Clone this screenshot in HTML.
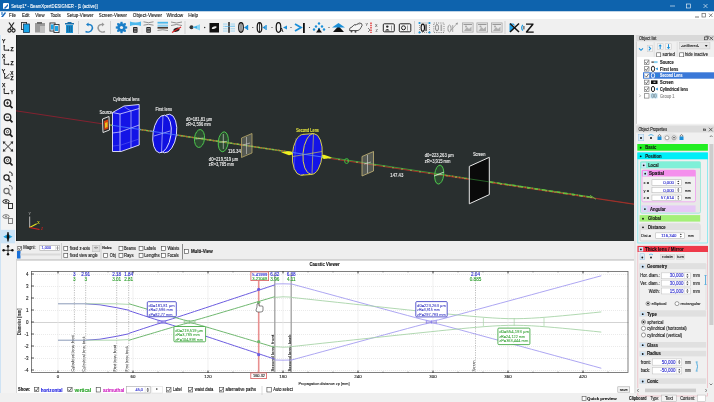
<!DOCTYPE html>
<html><head><meta charset="utf-8">
<style>
*{margin:0;padding:0}
html,body{width:714px;height:402px;overflow:hidden;background:#f0f0f0}
svg{display:block;font-family:"Liberation Sans",sans-serif;will-change:transform}
</style></head><body>
<svg width="714" height="402" viewBox="0 0 714 402">
<rect x="0" y="0" width="714" height="402" fill="#f0f0f0"/>
<rect x="0" y="0" width="714" height="11.5" fill="#0e63ad"/>
<rect x="0" y="11.5" width="714" height="7.8" fill="#ffffff"/>
<rect x="0" y="19" width="714" height="16" fill="#f0f0f0"/>
<rect x="0" y="35" width="16" height="358" fill="#f3f3f3"/>
<rect x="0" y="35" width="1" height="358" fill="#cfe3f4"/>
<rect x="16" y="35" width="618" height="206" fill="#292f2f"/>
<rect x="16" y="241" width="618" height="19" fill="#eeeeee"/>
<rect x="16" y="259.6" width="618" height="1" fill="#a8a8a8"/>
<rect x="16" y="260.6" width="618" height="133" fill="#ffffff"/>
<rect x="16" y="260.6" width="0.8" height="133" fill="#d0d0d0"/>
<rect x="635" y="35" width="79" height="358" fill="#f0f0f0"/>
<rect x="0" y="393" width="714" height="9" fill="#f0f0f0"/>
<rect x="3" y="3" width="6" height="6" fill="#ffffff" rx="1"/>
<polygon points="4.00,8.00 8.00,4.00 8.00,6.00 5.00,9.00" fill="#1b66b8"/>
<text x="11.2" y="8.16" font-size="6" fill="#ffffff" textLength="86.4" lengthAdjust="spacingAndGlyphs" stroke="#ffffff" stroke-width="0.12">Setup1* - BeamXpertDESIGNER - [1 (active)]</text>
<line x1="670" y1="6" x2="675" y2="6" stroke="#ffffff" stroke-width="0.6"/>
<rect x="686.3" y="4" width="4" height="4" fill="none" stroke="#fff" stroke-width="0.6"/>
<line x1="703.5" y1="4" x2="707.5" y2="8" stroke="#ffffff" stroke-width="0.6"/>
<line x1="707.5" y1="4" x2="703.5" y2="8" stroke="#ffffff" stroke-width="0.6"/>
<polygon points="1.00,17.00 5.00,12.00 6.00,13.00 3.00,17.00" fill="#1b66b8"/>
<rect x="1" y="12" width="2" height="3" fill="#7fb0e0"/>
<text x="9" y="17.42" font-size="5.6" fill="#1a1a1a" textLength="7" lengthAdjust="spacingAndGlyphs" stroke="#1a1a1a" stroke-width="0.12">File</text>
<text x="22" y="17.42" font-size="5.6" fill="#1a1a1a" textLength="7.5" lengthAdjust="spacingAndGlyphs" stroke="#1a1a1a" stroke-width="0.12">Edit</text>
<text x="35.3" y="17.42" font-size="5.6" fill="#1a1a1a" textLength="9.2" lengthAdjust="spacingAndGlyphs" stroke="#1a1a1a" stroke-width="0.12">View</text>
<text x="50.4" y="17.42" font-size="5.6" fill="#1a1a1a" textLength="10.4" lengthAdjust="spacingAndGlyphs" stroke="#1a1a1a" stroke-width="0.12">Tools</text>
<text x="66.7" y="17.42" font-size="5.6" fill="#1a1a1a" textLength="26.7" lengthAdjust="spacingAndGlyphs" stroke="#1a1a1a" stroke-width="0.12">Setup-Viewer</text>
<text x="98.8" y="17.42" font-size="5.6" fill="#1a1a1a" textLength="28.2" lengthAdjust="spacingAndGlyphs" stroke="#1a1a1a" stroke-width="0.12">Screen-Viewer</text>
<text x="132.8" y="17.42" font-size="5.6" fill="#1a1a1a" textLength="29.3" lengthAdjust="spacingAndGlyphs" stroke="#1a1a1a" stroke-width="0.12">Object-Viewer</text>
<text x="166.4" y="17.42" font-size="5.6" fill="#1a1a1a" textLength="16.8" lengthAdjust="spacingAndGlyphs" stroke="#1a1a1a" stroke-width="0.12">Window</text>
<text x="188.2" y="17.42" font-size="5.6" fill="#1a1a1a" textLength="10" lengthAdjust="spacingAndGlyphs" stroke="#1a1a1a" stroke-width="0.12">Help</text>
<line x1="695" y1="17" x2="699" y2="17" stroke="#555" stroke-width="0.8"/>
<rect x="702" y="13.5" width="3.5" height="3.5" fill="none" stroke="#666" stroke-width="0.7"/>
<line x1="709" y1="13.5" x2="712.5" y2="17" stroke="#555" stroke-width="0.7"/>
<line x1="712.5" y1="13.5" x2="709" y2="17" stroke="#555" stroke-width="0.7"/>
<g stroke="#222" stroke-width="1.2" fill="none">
<line x1="9" y1="22.5" x2="13.5" y2="29" stroke="#222" stroke-width="1.2"/>
<line x1="14" y1="22.5" x2="9.5" y2="29" stroke="#222" stroke-width="1.2"/>
<circle cx="9.5" cy="30.5" r="1.6" fill="none" stroke="#222" stroke-width="1.1"/>
<circle cx="13.5" cy="30.5" r="1.6" fill="none" stroke="#222" stroke-width="1.1"/>
</g>
<rect x="21.45" y="22.45" width="5.1" height="7.1" fill="#f0f0f0" stroke="#333" stroke-width="0.9"/>
<rect x="23.5" y="24" width="6" height="8.5" fill="#19a4e8"/>
<rect x="23.5" y="24" width="6" height="8.5" fill="none" stroke="#1a3d5a" stroke-width="0.8"/>
<rect x="35" y="23" width="10" height="9.5" fill="#9a9a9a"/>
<rect x="37" y="22" width="5" height="2" fill="#6a6a6a"/>
<rect x="40" y="26" width="5" height="6.5" fill="#c0c0c0"/>
<rect x="49.95" y="22.95" width="5.1" height="8.1" fill="#e8f4ff" stroke="#333" stroke-width="0.9"/>
<rect x="53.95" y="24.45" width="5.1" height="8.1" fill="#e8f4ff" stroke="#333" stroke-width="0.9"/>
<rect x="51" y="24.5" width="2.5" height="5" fill="#19a4e8"/>
<rect x="55" y="26" width="3" height="5" fill="#19a4e8"/>
<rect x="65" y="23" width="9" height="1.5" fill="#1c6fa8"/>
<rect x="67.5" y="22" width="4" height="1.2" fill="#1c6fa8"/>
<rect x="66" y="25" width="7" height="8" fill="#1a8fd0"/>
<line x1="67.8" y1="26" x2="67.8" y2="32" stroke="#0c4a78" stroke-width="0.6"/>
<line x1="69.5" y1="26" x2="69.5" y2="32" stroke="#0c4a78" stroke-width="0.6"/>
<line x1="71.2" y1="26" x2="71.2" y2="32" stroke="#0c4a78" stroke-width="0.6"/>
<line x1="78.5" y1="21" x2="78.5" y2="34" stroke="#cfcfcf" stroke-width="1"/>
<path d="M86 24.5 L88.5 22.5 L88.5 26.5 Z" fill="#1b7fc8"/>
<path d="M88 24.5 C92 24 93 27 92 29.5 C91 32 88 32.5 85.5 31.5" fill="none" stroke="#1b7fc8" stroke-width="1.5"/>
<path d="M104.5 24.5 L102 22.5 L102 26.5 Z" fill="#9a9a9a"/>
<path d="M102.5 24.5 C98.5 24 97.5 27 98.5 29.5 C99.5 32 102.5 32.5 105 31.5" fill="none" stroke="#9a9a9a" stroke-width="1.5"/>
<line x1="110.5" y1="21" x2="110.5" y2="34" stroke="#cfcfcf" stroke-width="1"/>
<circle cx="121.5" cy="27.5" r="4.2" fill="#1b7fc8"/>
<circle cx="121.5" cy="27.5" r="1.6" fill="#f0f0f0"/>
<rect x="125.00" y="26.40" width="2.2" height="2.2" fill="#1b7fc8"/>
<rect x="123.65" y="29.65" width="2.2" height="2.2" fill="#1b7fc8"/>
<rect x="120.40" y="31.00" width="2.2" height="2.2" fill="#1b7fc8"/>
<rect x="117.15" y="29.65" width="2.2" height="2.2" fill="#1b7fc8"/>
<rect x="115.80" y="26.40" width="2.2" height="2.2" fill="#1b7fc8"/>
<rect x="117.15" y="23.15" width="2.2" height="2.2" fill="#1b7fc8"/>
<rect x="120.40" y="21.80" width="2.2" height="2.2" fill="#1b7fc8"/>
<rect x="123.65" y="23.15" width="2.2" height="2.2" fill="#1b7fc8"/>
<line x1="129" y1="21" x2="129" y2="34" stroke="#e0e0e0" stroke-width="0.6"/>
<line x1="142" y1="21" x2="142" y2="34" stroke="#e0e0e0" stroke-width="0.6"/>
<path d="M130 21.5 Q135.5 23.5 141 21.5 L141 26 Q135.5 24 130 26 Z" fill="#4cb8ec"/>
<rect x="133" y="27" width="4.5" height="5.8" rx="0.8" fill="#222"/>
<rect x="133.8" y="28.3" width="2.9" height="1" fill="#bbb"/>
<rect x="133.8" y="30.6" width="2.9" height="1" fill="#bbb"/>
<path d="M143.5 21.8 Q148.5 23.6 153.5 21.8 M143.5 25.2 Q148.5 23.4 153.5 25.2" fill="none" stroke="#777" stroke-width="0.8"/>
<rect x="146.3" y="27" width="4.5" height="5.8" rx="0.8" fill="#222"/>
<rect x="147.1" y="28.3" width="2.9" height="1" fill="#bbb"/>
<rect x="147.1" y="30.6" width="2.9" height="1" fill="#bbb"/>
<rect x="157.5" y="21.8" width="10.5" height="1.8" fill="#4cb8ec"/>
<rect x="157.5" y="24.6" width="10.5" height="2.2" fill="#8fd0f0"/>
<rect x="157.5" y="27" width="10.5" height="1.6" fill="#4a3a30"/>
<path d="M157.5 30.5 Q162.7 29 168 30.5" fill="none" stroke="#888" stroke-width="0.9"/>
<path d="M171 22 Q176.5 24 182 22 M171 25.5 Q176.5 23.5 182 25.5" fill="none" stroke="#777" stroke-width="0.8"/>
<ellipse cx="176.5" cy="29.8" rx="3.2" ry="1.9" fill="#222" transform="rotate(-20 176.5 29.8)"/>
<line x1="172" y1="32.5" x2="181" y2="27" stroke="#e02020" stroke-width="1.2"/>
<line x1="185" y1="21" x2="185" y2="34" stroke="#cfcfcf" stroke-width="1"/>
<circle cx="191.5" cy="27.3" r="2" fill="#333"/>
<polygon points="192.50,27.30 200.00,24.30 200.00,30.50" fill="#8ad4f2"/>
<polygon points="192.50,27.30 197.00,26.00 197.00,28.60" fill="#3ab0e8"/>
<circle cx="204.7" cy="27.5" r="0.7" fill="#222"/>
<rect x="209.5" y="23" width="9.5" height="9.5" fill="#111"/>
<ellipse cx="214.2" cy="27.6" rx="2.6" ry="1.1" fill="#e8e8e8" transform="rotate(-20 214.2 27.6)"/>
<rect x="228.3" y="22" width="1.4" height="10.8" fill="#111"/>
<rect x="223" y="23.5" width="4.5" height="1.1" fill="#a8d8f0"/>
<rect x="230.5" y="23.5" width="4.5" height="1.1" fill="#a8d8f0"/>
<rect x="223" y="25.8" width="4.5" height="1.1" fill="#a8d8f0"/>
<rect x="230.5" y="25.8" width="4.5" height="1.1" fill="#a8d8f0"/>
<rect x="223" y="28.2" width="4.5" height="1.1" fill="#a8d8f0"/>
<rect x="230.5" y="28.2" width="4.5" height="1.1" fill="#a8d8f0"/>
<rect x="223" y="30.5" width="4.5" height="1.1" fill="#a8d8f0"/>
<rect x="230.5" y="30.5" width="4.5" height="1.1" fill="#a8d8f0"/>
<line x1="225" y1="26.6" x2="235" y2="26.1" stroke="#5ab8ec" stroke-width="0.6"/>
<circle cx="252.8" cy="27.5" r="0.6" fill="#333"/>
<circle cx="272" cy="27.5" r="0.6" fill="#333"/>
<circle cx="291" cy="27.5" r="0.6" fill="#333"/>
<circle cx="309.5" cy="27.5" r="0.6" fill="#333"/>
<circle cx="329" cy="27.5" r="0.6" fill="#333"/>
<ellipse cx="241" cy="27.5" rx="2.3" ry="4.8" fill="none" stroke="#111" stroke-width="1.2"/>
<rect x="240.6" y="22.7" width="0.8" height="9.6" fill="#111"/>
<polygon points="244.00,27.50 247.00,25.50 247.00,29.50" fill="#1b8fd8"/>
<rect x="247" y="25" width="1.2" height="5" fill="#1b8fd8"/>
<ellipse cx="259.5" cy="27.5" rx="2.3" ry="4.8" fill="none" stroke="#111" stroke-width="1.2"/>
<rect x="259.1" y="22.7" width="0.8" height="9.6" fill="#111"/>
<polygon points="262.50,27.50 265.50,25.50 265.50,29.50" fill="#1b8fd8"/>
<rect x="265.5" y="25" width="1.2" height="5" fill="#1b8fd8"/>
<ellipse cx="278.5" cy="27.5" rx="2.3" ry="4.8" fill="none" stroke="#111" stroke-width="1.2"/>
<text x="279.5" y="31.98" font-size="5.5" fill="#111" font-weight="bold" stroke="#111" stroke-width="0.1">A</text>
<polygon points="283.00,27.50 287.00,25.50 287.00,29.50" fill="#1b8fd8"/>
<polyline points="295.00,24.00 301.00,27.50 295.00,31.00" fill="none" stroke="#1b8fd8" stroke-width="1.8"/>
<rect x="303" y="23" width="1.8" height="10" fill="#111"/>
<circle cx="319" cy="23.5" r="1.2" fill="#1b8fd8"/>
<circle cx="316" cy="26.5" r="1.2" fill="#1b8fd8"/>
<circle cx="322" cy="26.5" r="1.2" fill="#1b8fd8"/>
<circle cx="314" cy="29.5" r="1.2" fill="#1b8fd8"/>
<circle cx="319" cy="29" r="1.2" fill="#1b8fd8"/>
<circle cx="324" cy="29.5" r="1.2" fill="#1b8fd8"/>
<polygon points="316.00,32.50 322.00,32.50 319.00,28.50" fill="#111"/>
<polygon points="333.00,32.00 344.00,32.00 338.50,26.00" fill="#111"/>
<polygon points="332.00,27.50 345.00,27.50 338.50,23.00" fill="#1b8fd8"/>
<path d="M349.5 30.5 q-0.5 -3 2.5 -3.5 q1.5 -3 5 -2.5 q2 -2.5 4.5 -1 q1.5 1.5 -0.5 4 q-1 2.5 -3 3 z" fill="#f4f4f4" stroke="#555" stroke-width="1"/>
<path d="M355 25.5 q2 -2.5 5 -1.5" fill="none" stroke="#888" stroke-width="0.8"/>
<circle cx="351.5" cy="31.5" r="1" fill="#444"/>
<circle cx="355.5" cy="31.8" r="1" fill="#444"/>
<text x="365.5" y="25.87" font-size="3.8" fill="#555" stroke="#555" stroke-width="0.12">Y</text>
<text x="375" y="27.37" font-size="3.8" fill="#555" stroke="#555" stroke-width="0.12">X</text>
<text x="375.5" y="32.37" font-size="3.8" fill="#555" stroke="#555" stroke-width="0.12">Z</text>
<line x1="371" y1="22.5" x2="371" y2="33" stroke="#e02020" stroke-width="1.3" stroke-dasharray="1.5,0.8"/>
<polyline points="368.00,28.00 370.00,30.00 368.00,32.00" fill="none" stroke="#333" stroke-width="0.6"/>
<rect x="383.3" y="23.8" width="11" height="8" rx="1" fill="#f4f4f4" stroke="#222" stroke-width="1"/>
<circle cx="387.3" cy="26.6" r="1.2" fill="#222"/>
<path d="M385 30.5 q2.3 -3 4.6 0 z" fill="#222"/>
<line x1="391.5" y1="25.5" x2="391.5" y2="30.5" stroke="#555" stroke-width="0.6"/>
<rect x="399.3" y="23.8" width="11.5" height="8" rx="1" fill="#f4f4f4" stroke="#222" stroke-width="1"/>
<circle cx="403.5" cy="27.8" r="2" fill="none" stroke="#222" stroke-width="1"/>
<line x1="407.5" y1="25.5" x2="407.5" y2="30.5" stroke="#555" stroke-width="0.6"/>
<line x1="414.5" y1="21" x2="414.5" y2="34" stroke="#cfcfcf" stroke-width="1"/>
<rect x="419.5" y="23" width="10" height="9.5" fill="none" stroke="#777" stroke-width="0.7" stroke-dasharray="1,1"/>
<ellipse cx="422.8" cy="27.7" rx="1.7" ry="3.6" fill="none" stroke="#111" stroke-width="1.1"/>
<rect x="425.5" y="24.3" width="1.1" height="6.8" fill="#111"/>
<circle cx="419.5" cy="23" r="1.1" fill="#1b9ae0"/>
<circle cx="429.5" cy="23" r="1.1" fill="#1b9ae0"/>
<circle cx="419.5" cy="32.5" r="1.1" fill="#1b9ae0"/>
<circle cx="429.5" cy="32.5" r="1.1" fill="#1b9ae0"/>
<rect x="433.8" y="23" width="10.2" height="9.5" fill="none" stroke="#666" stroke-width="0.8" stroke-dasharray="1,1.2"/>
<ellipse cx="437" cy="27.7" rx="1.5" ry="3.3" fill="none" stroke="#777" stroke-width="0.9"/>
<rect x="440.5" y="24.5" width="1.6" height="6.5" fill="#aaa"/>
<ellipse cx="449.5" cy="28.5" rx="1.6" ry="3.4" fill="none" stroke="#999" stroke-width="1"/>
<rect x="452.2" y="25" width="1" height="7" fill="#aaa"/>
<line x1="451" y1="30" x2="457.5" y2="23" stroke="#999" stroke-width="0.8"/>
<polygon points="458.00,22.50 455.50,23.20 457.30,25.00" fill="#999"/>
<rect x="462.4" y="22.9" width="10.7" height="9.2" fill="#e8e8e8" stroke="#a8a8a8" stroke-width="0.8"/>
<rect x="463.5" y="24" width="8.5" height="1" fill="#999"/>
<polygon points="464.00,31.00 467.00,27.00 469.00,29.00 471.50,26.50 471.50,31.00" fill="#b0b0b0"/>
<circle cx="466" cy="26.5" r="1" fill="#aaa"/>
<rect x="476.9" y="22.9" width="10.7" height="9.2" fill="#e8e8e8" stroke="#a8a8a8" stroke-width="0.8"/>
<rect x="478.0" y="24" width="8.5" height="1" fill="#999"/>
<polygon points="478.50,31.00 481.50,27.00 483.50,29.00 486.00,26.50 486.00,31.00" fill="#b0b0b0"/>
<circle cx="480.5" cy="26.5" r="1" fill="#aaa"/>
<rect x="491.4" y="22.9" width="10.7" height="9.2" fill="#e8e8e8" stroke="#a8a8a8" stroke-width="0.8"/>
<rect x="492.5" y="24" width="8.5" height="1" fill="#999"/>
<polygon points="493.00,31.00 496.00,27.00 498.00,29.00 500.50,26.50 500.50,31.00" fill="#b0b0b0"/>
<circle cx="495" cy="26.5" r="1" fill="#aaa"/>
<line x1="505" y1="21" x2="505" y2="34" stroke="#cfcfcf" stroke-width="1"/>
<polygon points="509.50,23.50 509.50,32.00 514.00,27.70" fill="#1b9ae0"/>
<polygon points="510.00,23.50 513.50,23.50 515.50,26.00" fill="#1b9ae0"/>
<polyline points="510.00,23.50 519.00,32.00" fill="none" stroke="#111" stroke-width="1.5"/>
<polyline points="519.00,23.50 510.00,32.00" fill="none" stroke="#111" stroke-width="1.5"/>
<path d="M522.8 24.8 q-2.2 2.9 0 5.8" fill="none" stroke="#1b9ae0" stroke-width="1.2"/>
<rect x="523.3" y="26" width="1.2" height="3.4" fill="#555"/>
<path d="M526 23.5 h7.5 v1.3 l-5.6 6.6 h5.8 v1.3 h-7.8 v-1.3 l5.6 -6.6 h-5.5 z" fill="#111"/>
<text x="1.9" y="43.43" font-size="4.8" fill="#111" textLength="3.4" lengthAdjust="spacingAndGlyphs" stroke="#111" stroke-width="0.25">Y</text>
<circle cx="4.2" cy="45.699999999999996" r="0.75" fill="#111"/>
<line x1="4.2" y1="45.699999999999996" x2="4.2" y2="50.199999999999996" stroke="#111" stroke-width="0.9"/>
<line x1="4.2" y1="50.199999999999996" x2="8.600000000000001" y2="50.199999999999996" stroke="#111" stroke-width="0.9"/>
<polygon points="8.10,49.10 9.60,50.20 8.10,51.30" fill="#111"/>
<text x="10.6" y="50.73" font-size="4.8" fill="#111" textLength="3.1" lengthAdjust="spacingAndGlyphs" stroke="#111" stroke-width="0.25">Z</text>
<text x="1.9" y="57.53" font-size="4.8" fill="#111" textLength="3.4" lengthAdjust="spacingAndGlyphs" stroke="#111" stroke-width="0.25">X</text>
<circle cx="4.2" cy="59.8" r="0.75" fill="#111"/>
<line x1="4.2" y1="59.8" x2="4.2" y2="64.3" stroke="#111" stroke-width="0.9"/>
<line x1="4.2" y1="64.3" x2="8.600000000000001" y2="64.3" stroke="#111" stroke-width="0.9"/>
<polygon points="8.10,63.20 9.60,64.30 8.10,65.40" fill="#111"/>
<text x="10.6" y="64.83" font-size="4.8" fill="#111" textLength="3.1" lengthAdjust="spacingAndGlyphs" stroke="#111" stroke-width="0.25">Z</text>
<circle cx="4.6" cy="73.7" r="0.7" fill="#111"/>
<line x1="4.6" y1="73.7" x2="4.6" y2="78.3" stroke="#111" stroke-width="0.8"/>
<line x1="4.6" y1="78.3" x2="9.6" y2="78.0" stroke="#111" stroke-width="0.8"/>
<line x1="4.6" y1="78.3" x2="9.6" y2="73.9" stroke="#111" stroke-width="0.8"/>
<text x="1.8" y="72.56" font-size="4.6" fill="#111" textLength="3.3" lengthAdjust="spacingAndGlyphs" stroke="#111" stroke-width="0.25">Y</text>
<text x="10.3" y="74.76" font-size="4.6" fill="#111" textLength="3.2" lengthAdjust="spacingAndGlyphs" stroke="#111" stroke-width="0.25">X</text>
<text x="10.4" y="79.76" font-size="4.6" fill="#111" textLength="3" lengthAdjust="spacingAndGlyphs" stroke="#111" stroke-width="0.25">Z</text>
<text x="1.9" y="86.73" font-size="4.8" fill="#111" textLength="3.4" lengthAdjust="spacingAndGlyphs" stroke="#111" stroke-width="0.25">X</text>
<circle cx="4.2" cy="89.0" r="0.75" fill="#111"/>
<line x1="4.2" y1="89.0" x2="4.2" y2="93.5" stroke="#111" stroke-width="0.9"/>
<line x1="4.2" y1="93.5" x2="8.600000000000001" y2="93.5" stroke="#111" stroke-width="0.9"/>
<polygon points="8.10,92.40 9.60,93.50 8.10,94.60" fill="#111"/>
<text x="10.6" y="94.03" font-size="4.8" fill="#111" textLength="3.1" lengthAdjust="spacingAndGlyphs" stroke="#111" stroke-width="0.25">Y</text>
<circle cx="7.5" cy="103" r="3.3" fill="none" stroke="#222" stroke-width="1.3"/>
<line x1="9.8" y1="105.4" x2="12.5" y2="108.2" stroke="#222" stroke-width="1.8"/>
<line x1="6" y1="103" x2="9" y2="103" stroke="#222" stroke-width="0.9"/>
<line x1="7.5" y1="101.5" x2="7.5" y2="104.5" stroke="#222" stroke-width="0.9"/>
<circle cx="7.5" cy="117.2" r="3.3" fill="none" stroke="#222" stroke-width="1.3"/>
<line x1="9.8" y1="119.60000000000001" x2="12.5" y2="122.4" stroke="#222" stroke-width="1.8"/>
<line x1="6" y1="117.2" x2="9" y2="117.2" stroke="#222" stroke-width="0.9"/>
<circle cx="7.5" cy="131.7" r="3.3" fill="none" stroke="#222" stroke-width="1.3"/>
<line x1="9.8" y1="134.1" x2="12.5" y2="136.89999999999998" stroke="#222" stroke-width="1.8"/>
<circle cx="7.5" cy="131.7" r="1.2" fill="none" stroke="#222" stroke-width="0.7"/>
<line x1="3.5" y1="142" x2="12.5" y2="151" stroke="#333" stroke-width="1.0"/>
<line x1="12.5" y1="142" x2="3.5" y2="151" stroke="#333" stroke-width="1.0"/>
<polygon points="2.80,141.30 5.80,141.80 3.30,144.30" fill="#333"/>
<polygon points="13.20,141.30 10.20,141.80 12.70,144.30" fill="#333"/>
<polygon points="2.80,151.70 5.80,151.20 3.30,148.70" fill="#333"/>
<polygon points="13.20,151.70 10.20,151.20 12.70,148.70" fill="#333"/>
<circle cx="7.5" cy="160.3" r="3.3" fill="none" stroke="#222" stroke-width="1.3"/>
<line x1="9.8" y1="162.70000000000002" x2="12.5" y2="165.5" stroke="#222" stroke-width="1.8"/>
<circle cx="7.5" cy="160.3" r="1.2" fill="none" stroke="#222" stroke-width="0.7"/>
<circle cx="6.5" cy="177.5" r="2.6" fill="none" stroke="#222" stroke-width="1.2"/>
<line x1="8.5" y1="179.5" x2="11" y2="182" stroke="#222" stroke-width="1.6"/>
<path d="M9 172 q4 0 3 4" fill="none" stroke="#222" stroke-width="1"/>
<circle cx="6.5" cy="191" r="2.6" fill="none" stroke="#666" stroke-width="1.1"/>
<line x1="8.5" y1="193" x2="11" y2="195.5" stroke="#666" stroke-width="1.5"/>
<path d="M9 185.5 q4 0 3 4" fill="none" stroke="#666" stroke-width="1"/>
<ellipse cx="6" cy="201.5" rx="3.2" ry="1.8" fill="none" stroke="#222" stroke-width="1"/>
<circle cx="6" cy="201.5" r="0.9" fill="#222"/>
<rect x="8.45" y="203.45" width="4.1" height="5.1" fill="#f3f3f3" stroke="#222" stroke-width="0.9"/>
<ellipse cx="6" cy="216.5" rx="3.2" ry="1.8" fill="none" stroke="#777" stroke-width="1"/>
<circle cx="6" cy="216.5" r="0.9" fill="#777"/>
<rect x="8.45" y="218.45" width="4.1" height="5.1" fill="#f3f3f3" stroke="#777" stroke-width="0.9"/>
<rect x="1" y="229.8" width="14" height="13.5" fill="#cce4f7"/>
<polygon points="3.50,236.70 8.00,234.30 12.50,236.70 8.00,239.10" fill="#1ba0e0"/>
<path d="M8 232 q-2.2 4.7 0 9.5 q2.2 -4.7 0 -9.5z" fill="#111" stroke="#111" stroke-width="0.6"/>
<polygon points="3.50,236.70 6.30,235.20 6.30,238.20" fill="#1ba0e0"/>
<line x1="8" y1="246.2" x2="8" y2="254.4" stroke="#222" stroke-width="0.9"/>
<line x1="3.6" y1="250.3" x2="12.4" y2="250.3" stroke="#222" stroke-width="0.9"/>
<circle cx="8" cy="246.3" r="1.2" fill="#111"/>
<circle cx="8" cy="254.3" r="1.2" fill="#111"/>
<circle cx="3.6" cy="250.3" r="1.2" fill="#111"/>
<circle cx="12.4" cy="250.3" r="1.2" fill="#111"/>
<g>
<rect x="16" y="35" width="1" height="206" fill="#1a1e1e"/>
<line x1="16" y1="110.8" x2="634" y2="203.99439999999998" stroke="#8c2030" stroke-width="0.9"/>
<line x1="106" y1="124.37" x2="330" y2="158.15" stroke="#50b040" stroke-width="1.4"/>
<line x1="106" y1="124.37" x2="330" y2="158.15" stroke="#c86030" stroke-width="1.4" stroke-dasharray="1.6,1.4"/>
<line x1="330" y1="157.55" x2="593" y2="197.21" stroke="#3a9a3a" stroke-width="1.1"/>
<line x1="330" y1="158.45" x2="634" y2="204.29" stroke="#a03828" stroke-width="0.9"/>
<line x1="445" y1="175.19" x2="593" y2="197.51" stroke="#c86030" stroke-width="1.3" stroke-dasharray="1.5,2"/>
<circle cx="112" cy="125.2768" r="0.7" fill="#7ee060"/>
<circle cx="119" cy="126.33239999999999" r="0.7" fill="#7ee060"/>
<circle cx="126" cy="127.38799999999999" r="0.7" fill="#7ee060"/>
<circle cx="133" cy="128.4436" r="0.7" fill="#7ee060"/>
<circle cx="140" cy="129.4992" r="0.7" fill="#7ee060"/>
<circle cx="147" cy="130.5548" r="0.7" fill="#7ee060"/>
<circle cx="154" cy="131.6104" r="0.7" fill="#7ee060"/>
<circle cx="161" cy="132.666" r="0.7" fill="#7ee060"/>
<circle cx="168" cy="133.7216" r="0.7" fill="#7ee060"/>
<circle cx="175" cy="134.7772" r="0.7" fill="#7ee060"/>
<circle cx="182" cy="135.8328" r="0.7" fill="#7ee060"/>
<circle cx="189" cy="136.8884" r="0.7" fill="#7ee060"/>
<circle cx="196" cy="137.944" r="0.7" fill="#7ee060"/>
<circle cx="203" cy="138.9996" r="0.7" fill="#7ee060"/>
<circle cx="210" cy="140.05519999999999" r="0.7" fill="#7ee060"/>
<circle cx="217" cy="141.11079999999998" r="0.7" fill="#7ee060"/>
<circle cx="224" cy="142.1664" r="0.7" fill="#7ee060"/>
<circle cx="231" cy="143.22199999999998" r="0.7" fill="#7ee060"/>
<circle cx="238" cy="144.2776" r="0.7" fill="#7ee060"/>
<circle cx="245" cy="145.3332" r="0.7" fill="#7ee060"/>
<circle cx="252" cy="146.3888" r="0.7" fill="#7ee060"/>
<circle cx="259" cy="147.4444" r="0.7" fill="#7ee060"/>
<circle cx="266" cy="148.5" r="0.7" fill="#7ee060"/>
<circle cx="273" cy="149.5556" r="0.7" fill="#7ee060"/>
<circle cx="280" cy="150.6112" r="0.7" fill="#7ee060"/>
<circle cx="287" cy="151.6668" r="0.7" fill="#7ee060"/>
<circle cx="330" cy="158.1512" r="0.7" fill="#7ee060"/>
<circle cx="339" cy="159.5084" r="0.7" fill="#7ee060"/>
<circle cx="348" cy="160.8656" r="0.7" fill="#7ee060"/>
<circle cx="357" cy="162.2228" r="0.7" fill="#7ee060"/>
<circle cx="366" cy="163.57999999999998" r="0.7" fill="#7ee060"/>
<circle cx="375" cy="164.9372" r="0.7" fill="#7ee060"/>
<circle cx="384" cy="166.2944" r="0.7" fill="#7ee060"/>
<circle cx="393" cy="167.6516" r="0.7" fill="#7ee060"/>
<circle cx="402" cy="169.0088" r="0.7" fill="#7ee060"/>
<circle cx="411" cy="170.36599999999999" r="0.7" fill="#7ee060"/>
<circle cx="420" cy="171.7232" r="0.7" fill="#7ee060"/>
<circle cx="429" cy="173.0804" r="0.7" fill="#7ee060"/>
<circle cx="438" cy="174.4376" r="0.7" fill="#7ee060"/>
<circle cx="447" cy="175.7948" r="0.7" fill="#7ee060"/>
<circle cx="456" cy="177.152" r="0.7" fill="#7ee060"/>
<circle cx="465" cy="178.5092" r="0.7" fill="#7ee060"/>
<circle cx="474" cy="179.8664" r="0.7" fill="#7ee060"/>
<circle cx="483" cy="181.22359999999998" r="0.7" fill="#7ee060"/>
<circle cx="492" cy="182.5808" r="0.7" fill="#7ee060"/>
<circle cx="501" cy="183.938" r="0.7" fill="#7ee060"/>
<circle cx="510" cy="185.2952" r="0.7" fill="#7ee060"/>
<circle cx="519" cy="186.6524" r="0.7" fill="#7ee060"/>
<circle cx="528" cy="188.00959999999998" r="0.7" fill="#7ee060"/>
<circle cx="537" cy="189.3668" r="0.7" fill="#7ee060"/>
<circle cx="546" cy="190.724" r="0.7" fill="#7ee060"/>
<circle cx="555" cy="192.0812" r="0.7" fill="#7ee060"/>
<circle cx="564" cy="193.4384" r="0.7" fill="#7ee060"/>
<circle cx="573" cy="194.79559999999998" r="0.7" fill="#7ee060"/>
<circle cx="582" cy="196.15279999999998" r="0.7" fill="#7ee060"/>
<circle cx="591" cy="197.51" r="0.7" fill="#7ee060"/>
<polygon points="112.50,112.50 124.00,106.00 139.20,104.50 139.20,145.00 121.00,151.50 112.50,151.50" fill="#1414e6" stroke="#e8e8ff" stroke-width="0.9"/>
<polyline points="112.50,112.50 120.00,114.00 139.20,108.50" fill="none" stroke="#dcdcff" stroke-width="0.8"/>
<line x1="120" y1="114" x2="120" y2="151.5" stroke="#dcdcff" stroke-width="0.8"/>
<line x1="131" y1="111" x2="131" y2="148" stroke="#dcdcff" stroke-width="0.6"/>
<line x1="124.5" y1="107" x2="131" y2="111" stroke="#dcdcff" stroke-width="0.5"/>
<polyline points="112.50,133.00 120.00,132.00 139.20,125.00" fill="none" stroke="#dcdcff" stroke-width="0.7"/>
<polyline points="113.00,146.00 121.00,145.00 139.00,139.00" fill="none" stroke="#6a6af0" stroke-width="0.5"/>
<line x1="112" y1="125.2768" x2="141" y2="129.65" stroke="#5080ff" stroke-width="0.8"/>
<polygon points="102.50,119.00 109.00,116.50 109.50,130.00 103.00,132.50" fill="#2a2a2a" stroke="#f0f0f0" stroke-width="0.9"/>
<polygon points="104.00,121.00 108.00,119.50 108.30,128.50 104.30,130.00" fill="#d84010"/>
<polygon points="105.00,123.00 107.50,122.00 107.50,127.00 105.00,128.00" fill="#e8c020"/>
<ellipse cx="167" cy="133.5" rx="9.5" ry="19.5" fill="#1010e0" stroke="#e8e8ff" stroke-width="0.9" transform="rotate(8 167 133.5)"/>
<ellipse cx="162" cy="134" rx="9" ry="19" fill="#1010e0" stroke="#e8e8ff" stroke-width="0.9" transform="rotate(8 162 134)"/>
<line x1="154" y1="136" x2="170" y2="131" stroke="#e8e8ff" stroke-width="0.6"/>
<line x1="163" y1="115" x2="161.5" y2="153" stroke="#e8e8ff" stroke-width="0.6"/>
<line x1="150" y1="131.0072" x2="178" y2="135.2296" stroke="#5080ff" stroke-width="0.8"/>
<ellipse cx="199.5" cy="138.5" rx="5" ry="9" fill="rgba(60,170,60,0.22)" stroke="#50d050" stroke-width="0.9" transform="rotate(6 199.5 138.5)"/>
<line x1="195.5" y1="139.0" x2="203.5" y2="138.0" stroke="#c8f0c8" stroke-width="0.6"/>
<ellipse cx="223.3" cy="141.8" rx="5" ry="10" fill="rgba(60,170,60,0.22)" stroke="#50d050" stroke-width="0.9" transform="rotate(6 223.3 141.8)"/>
<line x1="219.3" y1="142.3" x2="227.3" y2="141.3" stroke="#c8f0c8" stroke-width="0.6"/>
<line x1="223.3" y1="134" x2="223.3" y2="149" stroke="#e0e0e0" stroke-width="0.6"/>
<polygon points="241.50,138.00 252.00,133.50 252.00,153.00 241.50,157.50" fill="rgba(170,170,150,0.35)" stroke="#b8a868" stroke-width="0.8"/>
<line x1="246.5" y1="137" x2="246.5" y2="154" stroke="#d0d0d0" stroke-width="0.6"/>
<line x1="243" y1="145" x2="250" y2="143" stroke="#d0d0d0" stroke-width="0.6"/>
<polygon points="281.00,152.20 289.00,151.20 297.00,153.60 289.00,155.20" fill="#f0f020"/>
<polygon points="317.00,155.50 324.00,154.80 332.00,157.60 324.00,159.00" fill="#f0f020"/>
<ellipse cx="302" cy="154.8" rx="9.6" ry="20.4" fill="#1414e6" stroke="#e8e040" stroke-width="0.9" transform="rotate(4 302 154.8)"/>
<polygon points="302.70,134.40 313.30,133.60 311.90,173.60 301.30,174.40" fill="#1414e6"/>
<line x1="302.7" y1="134.4" x2="313.3" y2="133.6" stroke="#e8e040" stroke-width="0.9"/>
<line x1="301.3" y1="175.2" x2="311.9" y2="174.4" stroke="#e8e040" stroke-width="0.9"/>
<ellipse cx="312.6" cy="154" rx="9.6" ry="20.4" fill="#1414e6" stroke="#e8e040" stroke-width="0.9" transform="rotate(4 312.6 154)"/>
<line x1="313.5" y1="133.8" x2="312" y2="174.2" stroke="#e8e040" stroke-width="0.6"/>
<line x1="293" y1="156.5" x2="322" y2="151.5" stroke="#e8e040" stroke-width="0.6"/>
<line x1="296" y1="138" x2="294" y2="170" stroke="#8080f0" stroke-width="0.4"/>
<line x1="292" y1="152.42079999999999" x2="323" y2="157.0956" stroke="#5a8cff" stroke-width="0.8"/>
<ellipse cx="346.6" cy="161" rx="2" ry="2.5" fill="none" stroke="#40c040" stroke-width="0.9"/>
<polygon points="362.00,156.50 373.50,151.50 373.50,171.00 362.00,176.00" fill="rgba(170,170,150,0.35)" stroke="#c8b878" stroke-width="0.8"/>
<line x1="367.5" y1="155" x2="367.5" y2="173" stroke="#e0e0e0" stroke-width="0.6"/>
<line x1="364" y1="164" x2="371" y2="162" stroke="#e0e0e0" stroke-width="0.6"/>
<ellipse cx="439.2" cy="174.6" rx="4.5" ry="9.5" fill="rgba(60,170,60,0.22)" stroke="#50d050" stroke-width="0.9" transform="rotate(6 439.2 174.6)"/>
<line x1="435.7" y1="175.1" x2="442.7" y2="174.1" stroke="#c8f0c8" stroke-width="0.6"/>
<line x1="434" y1="176" x2="444" y2="172" stroke="#d0f8d0" stroke-width="0.8"/>
<polygon points="469.30,166.40 489.30,157.30 489.30,194.60 469.30,203.80" fill="#0a0a0a" stroke="#e8e8e8" stroke-width="1.0"/>
<line x1="490" y1="181.98" x2="593" y2="197.51" stroke="#60c040" stroke-width="1.5" stroke-dasharray="3.5,4"/>
<line x1="470" y1="178.96319999999997" x2="489" y2="181.8284" stroke="#2a6a2a" stroke-width="0.9"/>
<line x1="590" y1="195.3592" x2="596" y2="199.264" stroke="#60c040" stroke-width="0.9"/>
<text x="99.6" y="113.60" font-size="5" fill="#f2f2f2" textLength="12.6" lengthAdjust="spacingAndGlyphs" stroke="#f2f2f2" stroke-width="0.12">Source</text>
<text x="113" y="100.80" font-size="5" fill="#f2f2f2" textLength="26.4" lengthAdjust="spacingAndGlyphs" stroke="#f2f2f2" stroke-width="0.12">Cylindrical lens</text>
<text x="155.6" y="110.60" font-size="5" fill="#f2f2f2" textLength="16.3" lengthAdjust="spacingAndGlyphs" stroke="#f2f2f2" stroke-width="0.12">First lens</text>
<text x="185.9" y="121.40" font-size="5" fill="#f2f2f2" textLength="26.3" lengthAdjust="spacingAndGlyphs" stroke="#f2f2f2" stroke-width="0.12">d0=181,81 µm</text>
<text x="185.9" y="126.20" font-size="5" fill="#f2f2f2" textLength="25" lengthAdjust="spacingAndGlyphs" stroke="#f2f2f2" stroke-width="0.12">zR=2,596 mm</text>
<text x="208.8" y="160.60" font-size="5" fill="#f2f2f2" textLength="29.5" lengthAdjust="spacingAndGlyphs" stroke="#f2f2f2" stroke-width="0.12">d0=219,519 µm</text>
<text x="208.8" y="165.60" font-size="5" fill="#f2f2f2" textLength="25.2" lengthAdjust="spacingAndGlyphs" stroke="#f2f2f2" stroke-width="0.12">zR=3,785 mm</text>
<text x="227.9" y="152.60" font-size="5" fill="#f2f2f2" textLength="13" lengthAdjust="spacingAndGlyphs" stroke="#f2f2f2" stroke-width="0.12">116.34</text>
<text x="295.9" y="132.00" font-size="5" fill="#f0f040" textLength="22.9" lengthAdjust="spacingAndGlyphs" stroke="#f0f040" stroke-width="0.12">Second Lens</text>
<text x="390.3" y="176.80" font-size="5" fill="#f2f2f2" textLength="13" lengthAdjust="spacingAndGlyphs" stroke="#f2f2f2" stroke-width="0.12">147.43</text>
<text x="424.7" y="157.40" font-size="5" fill="#f2f2f2" textLength="29" lengthAdjust="spacingAndGlyphs" stroke="#f2f2f2" stroke-width="0.12">d0=223,263 µm</text>
<text x="424.7" y="162.80" font-size="5" fill="#f2f2f2" textLength="25.8" lengthAdjust="spacingAndGlyphs" stroke="#f2f2f2" stroke-width="0.12">zR=3,915 mm</text>
<text x="473" y="155.80" font-size="5" fill="#f2f2f2" textLength="12.4" lengthAdjust="spacingAndGlyphs" stroke="#f2f2f2" stroke-width="0.12">Screen</text>
<line x1="29.6" y1="227.5" x2="29.6" y2="216.5" stroke="#a0a0a0" stroke-width="1.2"/>
<line x1="29.6" y1="227.5" x2="36.7" y2="223.8" stroke="#e0e020" stroke-width="1.2"/>
<line x1="29.6" y1="227.5" x2="39.5" y2="229.5" stroke="#d02020" stroke-width="1.2"/>
<text x="28.5" y="214.76" font-size="3.5" fill="#a0a0a0" stroke="#a0a0a0" stroke-width="0.12">Y</text>
<text x="37.3" y="223.76" font-size="3.5" fill="#e0e020" stroke="#e0e020" stroke-width="0.12">X</text>
<text x="41" y="229.76" font-size="3.5" fill="#d02020" stroke="#d02020" stroke-width="0.12">Z</text>
</g>
<rect x="17.8" y="246.3" width="3.9" height="3.9" fill="#ffffff" stroke="#444" stroke-width="0.6"/>
<polyline points="18.40,248.25 19.39,249.50 21.20,246.90" fill="none" stroke="#333" stroke-width="0.7"/>
<text x="23.2" y="249.46" font-size="4.6" fill="#222" textLength="12.5" lengthAdjust="spacingAndGlyphs" stroke="#222" stroke-width="0.12">Magni:</text>
<rect x="39.8" y="245.5" width="19.9" height="4.800000000000001" fill="#ffffff" stroke="#a8a8a8" stroke-width="0.6"/>
<text x="41.5" y="249.48" font-size="4.4" fill="#3030d0" textLength="9.5" lengthAdjust="spacingAndGlyphs" stroke="#3030d0" stroke-width="0.12">1,000</text>
<line x1="55.5" y1="245.5" x2="55.5" y2="250.3" stroke="#ccc" stroke-width="0.5"/>
<polygon points="56.50,247.60 58.50,247.60 57.50,246.20" fill="#333"/>
<polygon points="56.50,248.40 58.50,248.40 57.50,249.80" fill="#333"/>
<rect x="17" y="251" width="3.5" height="7.5" fill="#1a70d8"/>
<rect x="20.5" y="253.5" width="40" height="2" fill="#dadada"/>
<line x1="61.5" y1="243" x2="61.5" y2="259" stroke="#b8b8b8" stroke-width="0.6"/>
<rect x="63.8" y="246.40000000000003" width="3.9" height="3.9" fill="#ffffff" stroke="#444" stroke-width="0.6"/>
<text x="69.8" y="249.62" font-size="4.5" fill="#222" textLength="20.3" lengthAdjust="spacingAndGlyphs" stroke="#222" stroke-width="0.12">fixed z-axis</text>
<rect x="92.5" y="245.3" width="7.2" height="6.4" fill="#e0e0e0" stroke="#c0c0c0" stroke-width="0.6"/>
<text x="96.1" y="249.45" font-size="3.2" fill="#666" text-anchor="middle" stroke="#666" stroke-width="0.12">&lt;&gt;</text>
<rect x="63.8" y="253.60000000000002" width="3.9" height="3.9" fill="#ffffff" stroke="#444" stroke-width="0.6"/>
<text x="69.8" y="257.12" font-size="4.5" fill="#222" textLength="28" lengthAdjust="spacingAndGlyphs" stroke="#222" stroke-width="0.12">fixed view angle</text>
<line x1="101" y1="243" x2="101" y2="259" stroke="#b8b8b8" stroke-width="0.6"/>
<text x="102.3" y="249.38" font-size="4.4" fill="#111" font-weight="bold" textLength="10" lengthAdjust="spacingAndGlyphs" stroke="#111" stroke-width="0.1">Nobs:</text>
<rect x="103.7" y="253.60000000000002" width="3.9" height="3.9" fill="#ffffff" stroke="#444" stroke-width="0.6"/>
<text x="109.7" y="257.12" font-size="4.5" fill="#222" textLength="6.1" lengthAdjust="spacingAndGlyphs" stroke="#222" stroke-width="0.12">Obj</text>
<rect x="119.0" y="246.40000000000003" width="3.9" height="3.9" fill="#ffffff" stroke="#444" stroke-width="0.6"/>
<text x="124" y="249.62" font-size="4.5" fill="#222" textLength="12" lengthAdjust="spacingAndGlyphs" stroke="#222" stroke-width="0.12">Beams</text>
<rect x="119.0" y="253.60000000000002" width="3.9" height="3.9" fill="#ffffff" stroke="#444" stroke-width="0.6"/>
<text x="124" y="257.12" font-size="4.5" fill="#222" textLength="9.5" lengthAdjust="spacingAndGlyphs" stroke="#222" stroke-width="0.12">Rays</text>
<rect x="139.10000000000002" y="246.40000000000003" width="3.9" height="3.9" fill="#ffffff" stroke="#444" stroke-width="0.6"/>
<text x="144.2" y="249.62" font-size="4.5" fill="#222" textLength="11.8" lengthAdjust="spacingAndGlyphs" stroke="#222" stroke-width="0.12">Labels</text>
<rect x="139.10000000000002" y="253.60000000000002" width="3.9" height="3.9" fill="#ffffff" stroke="#444" stroke-width="0.6"/>
<text x="144.2" y="257.12" font-size="4.5" fill="#222" textLength="15.5" lengthAdjust="spacingAndGlyphs" stroke="#222" stroke-width="0.12">Lengths</text>
<rect x="161.5" y="246.40000000000003" width="3.9" height="3.9" fill="#ffffff" stroke="#444" stroke-width="0.6"/>
<text x="167.4" y="249.62" font-size="4.5" fill="#222" textLength="12" lengthAdjust="spacingAndGlyphs" stroke="#222" stroke-width="0.12">Waists</text>
<rect x="161.5" y="253.60000000000002" width="3.9" height="3.9" fill="#ffffff" stroke="#444" stroke-width="0.6"/>
<text x="167.4" y="257.12" font-size="4.5" fill="#222" textLength="11.2" lengthAdjust="spacingAndGlyphs" stroke="#222" stroke-width="0.12">Focals</text>
<line x1="182.5" y1="244" x2="182.5" y2="259.3" stroke="#707070" stroke-width="0.8"/>
<rect x="184.5" y="249.5" width="3.9" height="3.9" fill="#ffffff" stroke="#444" stroke-width="0.6"/>
<text x="190.9" y="253.16" font-size="4.6" fill="#111" font-weight="bold" textLength="21.8" lengthAdjust="spacingAndGlyphs" stroke="#111" stroke-width="0.1">Multi-View</text>
<text x="324.6" y="265.73" font-size="4.8" fill="#111" text-anchor="middle" font-weight="bold" textLength="30.4" lengthAdjust="spacingAndGlyphs" stroke="#111" stroke-width="0.1">Caustic Viewer</text>
<rect x="31" y="271" width="597.5" height="102" fill="#ffffff"/>
<line x1="31" y1="370.5" x2="628.5" y2="370.5" stroke="#dcdcdc" stroke-width="0.6" stroke-dasharray="1,1"/>
<line x1="31" y1="358.5" x2="628.5" y2="358.5" stroke="#dcdcdc" stroke-width="0.6" stroke-dasharray="1,1"/>
<line x1="31" y1="346.5" x2="628.5" y2="346.5" stroke="#dcdcdc" stroke-width="0.6" stroke-dasharray="1,1"/>
<line x1="31" y1="334.5" x2="628.5" y2="334.5" stroke="#dcdcdc" stroke-width="0.6" stroke-dasharray="1,1"/>
<line x1="31" y1="322.5" x2="628.5" y2="322.5" stroke="#c8c8c8" stroke-width="0.8"/>
<line x1="31" y1="310.5" x2="628.5" y2="310.5" stroke="#dcdcdc" stroke-width="0.6" stroke-dasharray="1,1"/>
<line x1="31" y1="298.5" x2="628.5" y2="298.5" stroke="#dcdcdc" stroke-width="0.6" stroke-dasharray="1,1"/>
<line x1="31" y1="286.5" x2="628.5" y2="286.5" stroke="#dcdcdc" stroke-width="0.6" stroke-dasharray="1,1"/>
<line x1="31" y1="274.5" x2="628.5" y2="274.5" stroke="#dcdcdc" stroke-width="0.6" stroke-dasharray="1,1"/>
<line x1="58.0" y1="271" x2="58.0" y2="373" stroke="#eaeaea" stroke-width="0.7"/>
<line x1="133.0" y1="271" x2="133.0" y2="373" stroke="#eaeaea" stroke-width="0.7"/>
<line x1="208.0" y1="271" x2="208.0" y2="373" stroke="#eaeaea" stroke-width="0.7"/>
<line x1="283.0" y1="271" x2="283.0" y2="373" stroke="#eaeaea" stroke-width="0.7"/>
<line x1="358.0" y1="271" x2="358.0" y2="373" stroke="#eaeaea" stroke-width="0.7"/>
<line x1="433.0" y1="271" x2="433.0" y2="373" stroke="#eaeaea" stroke-width="0.7"/>
<line x1="508.0" y1="271" x2="508.0" y2="373" stroke="#eaeaea" stroke-width="0.7"/>
<line x1="583.0" y1="271" x2="583.0" y2="373" stroke="#eaeaea" stroke-width="0.7"/>
<line x1="58.0" y1="271" x2="58.0" y2="272.5" stroke="#555" stroke-width="0.6"/>
<line x1="58.0" y1="373" x2="58.0" y2="371.5" stroke="#555" stroke-width="0.6"/>
<line x1="83.0" y1="271" x2="83.0" y2="272.5" stroke="#555" stroke-width="0.6"/>
<line x1="83.0" y1="373" x2="83.0" y2="371.5" stroke="#555" stroke-width="0.6"/>
<line x1="108.0" y1="271" x2="108.0" y2="272.5" stroke="#555" stroke-width="0.6"/>
<line x1="108.0" y1="373" x2="108.0" y2="371.5" stroke="#555" stroke-width="0.6"/>
<line x1="133.0" y1="271" x2="133.0" y2="272.5" stroke="#555" stroke-width="0.6"/>
<line x1="133.0" y1="373" x2="133.0" y2="371.5" stroke="#555" stroke-width="0.6"/>
<line x1="158.0" y1="271" x2="158.0" y2="272.5" stroke="#555" stroke-width="0.6"/>
<line x1="158.0" y1="373" x2="158.0" y2="371.5" stroke="#555" stroke-width="0.6"/>
<line x1="183.0" y1="271" x2="183.0" y2="272.5" stroke="#555" stroke-width="0.6"/>
<line x1="183.0" y1="373" x2="183.0" y2="371.5" stroke="#555" stroke-width="0.6"/>
<line x1="208.0" y1="271" x2="208.0" y2="272.5" stroke="#555" stroke-width="0.6"/>
<line x1="208.0" y1="373" x2="208.0" y2="371.5" stroke="#555" stroke-width="0.6"/>
<line x1="233.0" y1="271" x2="233.0" y2="272.5" stroke="#555" stroke-width="0.6"/>
<line x1="233.0" y1="373" x2="233.0" y2="371.5" stroke="#555" stroke-width="0.6"/>
<line x1="258.0" y1="271" x2="258.0" y2="272.5" stroke="#555" stroke-width="0.6"/>
<line x1="258.0" y1="373" x2="258.0" y2="371.5" stroke="#555" stroke-width="0.6"/>
<line x1="283.0" y1="271" x2="283.0" y2="272.5" stroke="#555" stroke-width="0.6"/>
<line x1="283.0" y1="373" x2="283.0" y2="371.5" stroke="#555" stroke-width="0.6"/>
<line x1="308.0" y1="271" x2="308.0" y2="272.5" stroke="#555" stroke-width="0.6"/>
<line x1="308.0" y1="373" x2="308.0" y2="371.5" stroke="#555" stroke-width="0.6"/>
<line x1="333.0" y1="271" x2="333.0" y2="272.5" stroke="#555" stroke-width="0.6"/>
<line x1="333.0" y1="373" x2="333.0" y2="371.5" stroke="#555" stroke-width="0.6"/>
<line x1="358.0" y1="271" x2="358.0" y2="272.5" stroke="#555" stroke-width="0.6"/>
<line x1="358.0" y1="373" x2="358.0" y2="371.5" stroke="#555" stroke-width="0.6"/>
<line x1="383.0" y1="271" x2="383.0" y2="272.5" stroke="#555" stroke-width="0.6"/>
<line x1="383.0" y1="373" x2="383.0" y2="371.5" stroke="#555" stroke-width="0.6"/>
<line x1="408.0" y1="271" x2="408.0" y2="272.5" stroke="#555" stroke-width="0.6"/>
<line x1="408.0" y1="373" x2="408.0" y2="371.5" stroke="#555" stroke-width="0.6"/>
<line x1="433.0" y1="271" x2="433.0" y2="272.5" stroke="#555" stroke-width="0.6"/>
<line x1="433.0" y1="373" x2="433.0" y2="371.5" stroke="#555" stroke-width="0.6"/>
<line x1="458.0" y1="271" x2="458.0" y2="272.5" stroke="#555" stroke-width="0.6"/>
<line x1="458.0" y1="373" x2="458.0" y2="371.5" stroke="#555" stroke-width="0.6"/>
<line x1="483.0" y1="271" x2="483.0" y2="272.5" stroke="#555" stroke-width="0.6"/>
<line x1="483.0" y1="373" x2="483.0" y2="371.5" stroke="#555" stroke-width="0.6"/>
<line x1="508.0" y1="271" x2="508.0" y2="272.5" stroke="#555" stroke-width="0.6"/>
<line x1="508.0" y1="373" x2="508.0" y2="371.5" stroke="#555" stroke-width="0.6"/>
<line x1="533.0" y1="271" x2="533.0" y2="272.5" stroke="#555" stroke-width="0.6"/>
<line x1="533.0" y1="373" x2="533.0" y2="371.5" stroke="#555" stroke-width="0.6"/>
<line x1="558.0" y1="271" x2="558.0" y2="272.5" stroke="#555" stroke-width="0.6"/>
<line x1="558.0" y1="373" x2="558.0" y2="371.5" stroke="#555" stroke-width="0.6"/>
<line x1="583.0" y1="271" x2="583.0" y2="272.5" stroke="#555" stroke-width="0.6"/>
<line x1="583.0" y1="373" x2="583.0" y2="371.5" stroke="#555" stroke-width="0.6"/>
<line x1="608.0" y1="271" x2="608.0" y2="272.5" stroke="#555" stroke-width="0.6"/>
<line x1="608.0" y1="373" x2="608.0" y2="371.5" stroke="#555" stroke-width="0.6"/>
<rect x="31.5" y="271.5" width="596.5" height="101" fill="none" stroke="#606060" stroke-width="0.8"/>
<line x1="31" y1="274.0" x2="32.2" y2="274.0" stroke="#888" stroke-width="0.4"/>
<line x1="31" y1="276.4" x2="32.2" y2="276.4" stroke="#888" stroke-width="0.4"/>
<line x1="31" y1="278.8" x2="32.2" y2="278.8" stroke="#888" stroke-width="0.4"/>
<line x1="31" y1="281.2" x2="32.2" y2="281.2" stroke="#888" stroke-width="0.4"/>
<line x1="31" y1="283.6" x2="32.2" y2="283.6" stroke="#888" stroke-width="0.4"/>
<line x1="31" y1="286.0" x2="32.2" y2="286.0" stroke="#888" stroke-width="0.4"/>
<line x1="31" y1="288.4" x2="32.2" y2="288.4" stroke="#888" stroke-width="0.4"/>
<line x1="31" y1="290.8" x2="32.2" y2="290.8" stroke="#888" stroke-width="0.4"/>
<line x1="31" y1="293.2" x2="32.2" y2="293.2" stroke="#888" stroke-width="0.4"/>
<line x1="31" y1="295.6" x2="32.2" y2="295.6" stroke="#888" stroke-width="0.4"/>
<line x1="31" y1="298.0" x2="32.2" y2="298.0" stroke="#888" stroke-width="0.4"/>
<line x1="31" y1="300.4" x2="32.2" y2="300.4" stroke="#888" stroke-width="0.4"/>
<line x1="31" y1="302.8" x2="32.2" y2="302.8" stroke="#888" stroke-width="0.4"/>
<line x1="31" y1="305.2" x2="32.2" y2="305.2" stroke="#888" stroke-width="0.4"/>
<line x1="31" y1="307.6" x2="32.2" y2="307.6" stroke="#888" stroke-width="0.4"/>
<line x1="31" y1="310.0" x2="32.2" y2="310.0" stroke="#888" stroke-width="0.4"/>
<line x1="31" y1="312.4" x2="32.2" y2="312.4" stroke="#888" stroke-width="0.4"/>
<line x1="31" y1="314.8" x2="32.2" y2="314.8" stroke="#888" stroke-width="0.4"/>
<line x1="31" y1="317.2" x2="32.2" y2="317.2" stroke="#888" stroke-width="0.4"/>
<line x1="31" y1="319.6" x2="32.2" y2="319.6" stroke="#888" stroke-width="0.4"/>
<line x1="31" y1="322.0" x2="32.2" y2="322.0" stroke="#888" stroke-width="0.4"/>
<line x1="31" y1="324.4" x2="32.2" y2="324.4" stroke="#888" stroke-width="0.4"/>
<line x1="31" y1="326.8" x2="32.2" y2="326.8" stroke="#888" stroke-width="0.4"/>
<line x1="31" y1="329.2" x2="32.2" y2="329.2" stroke="#888" stroke-width="0.4"/>
<line x1="31" y1="331.6" x2="32.2" y2="331.6" stroke="#888" stroke-width="0.4"/>
<line x1="31" y1="334.0" x2="32.2" y2="334.0" stroke="#888" stroke-width="0.4"/>
<line x1="31" y1="336.4" x2="32.2" y2="336.4" stroke="#888" stroke-width="0.4"/>
<line x1="31" y1="338.8" x2="32.2" y2="338.8" stroke="#888" stroke-width="0.4"/>
<line x1="31" y1="341.2" x2="32.2" y2="341.2" stroke="#888" stroke-width="0.4"/>
<line x1="31" y1="343.6" x2="32.2" y2="343.6" stroke="#888" stroke-width="0.4"/>
<line x1="31" y1="346.0" x2="32.2" y2="346.0" stroke="#888" stroke-width="0.4"/>
<line x1="31" y1="348.4" x2="32.2" y2="348.4" stroke="#888" stroke-width="0.4"/>
<line x1="31" y1="350.8" x2="32.2" y2="350.8" stroke="#888" stroke-width="0.4"/>
<line x1="31" y1="353.2" x2="32.2" y2="353.2" stroke="#888" stroke-width="0.4"/>
<line x1="31" y1="355.6" x2="32.2" y2="355.6" stroke="#888" stroke-width="0.4"/>
<line x1="31" y1="358.0" x2="32.2" y2="358.0" stroke="#888" stroke-width="0.4"/>
<line x1="31" y1="360.4" x2="32.2" y2="360.4" stroke="#888" stroke-width="0.4"/>
<line x1="31" y1="362.8" x2="32.2" y2="362.8" stroke="#888" stroke-width="0.4"/>
<line x1="31" y1="365.2" x2="32.2" y2="365.2" stroke="#888" stroke-width="0.4"/>
<line x1="31" y1="367.6" x2="32.2" y2="367.6" stroke="#888" stroke-width="0.4"/>
<line x1="31" y1="370.0" x2="32.2" y2="370.0" stroke="#888" stroke-width="0.4"/>
<line x1="31" y1="370.0" x2="34" y2="370.0" stroke="#333" stroke-width="0.8"/>
<text x="28.5" y="371.62" font-size="4.5" fill="#222" text-anchor="end" stroke="#222" stroke-width="0.12">-4</text>
<line x1="31" y1="358.0" x2="34" y2="358.0" stroke="#333" stroke-width="0.8"/>
<text x="28.5" y="359.62" font-size="4.5" fill="#222" text-anchor="end" stroke="#222" stroke-width="0.12">-3</text>
<line x1="31" y1="346.0" x2="34" y2="346.0" stroke="#333" stroke-width="0.8"/>
<text x="28.5" y="347.62" font-size="4.5" fill="#222" text-anchor="end" stroke="#222" stroke-width="0.12">-2</text>
<line x1="31" y1="334.0" x2="34" y2="334.0" stroke="#333" stroke-width="0.8"/>
<text x="28.5" y="335.62" font-size="4.5" fill="#222" text-anchor="end" stroke="#222" stroke-width="0.12">-1</text>
<line x1="31" y1="322.0" x2="34" y2="322.0" stroke="#333" stroke-width="0.8"/>
<text x="28.5" y="323.62" font-size="4.5" fill="#222" text-anchor="end" stroke="#222" stroke-width="0.12">0</text>
<line x1="31" y1="310.0" x2="34" y2="310.0" stroke="#333" stroke-width="0.8"/>
<text x="28.5" y="311.62" font-size="4.5" fill="#222" text-anchor="end" stroke="#222" stroke-width="0.12">1</text>
<line x1="31" y1="298.0" x2="34" y2="298.0" stroke="#333" stroke-width="0.8"/>
<text x="28.5" y="299.62" font-size="4.5" fill="#222" text-anchor="end" stroke="#222" stroke-width="0.12">2</text>
<line x1="31" y1="286.0" x2="34" y2="286.0" stroke="#333" stroke-width="0.8"/>
<text x="28.5" y="287.62" font-size="4.5" fill="#222" text-anchor="end" stroke="#222" stroke-width="0.12">3</text>
<line x1="31" y1="274.0" x2="34" y2="274.0" stroke="#333" stroke-width="0.8"/>
<text x="28.5" y="275.62" font-size="4.5" fill="#222" text-anchor="end" stroke="#222" stroke-width="0.12">4</text>
<line x1="58.0" y1="373" x2="58.0" y2="370.5" stroke="#333" stroke-width="0.8"/>
<line x1="58.0" y1="271" x2="58.0" y2="273.5" stroke="#333" stroke-width="0.8"/>
<text x="58.0" y="378.38" font-size="4.4" fill="#222" text-anchor="middle" stroke="#222" stroke-width="0.12">0</text>
<line x1="133.0" y1="373" x2="133.0" y2="370.5" stroke="#333" stroke-width="0.8"/>
<line x1="133.0" y1="271" x2="133.0" y2="273.5" stroke="#333" stroke-width="0.8"/>
<text x="133.0" y="378.38" font-size="4.4" fill="#222" text-anchor="middle" stroke="#222" stroke-width="0.12">60</text>
<line x1="208.0" y1="373" x2="208.0" y2="370.5" stroke="#333" stroke-width="0.8"/>
<line x1="208.0" y1="271" x2="208.0" y2="273.5" stroke="#333" stroke-width="0.8"/>
<text x="208.0" y="378.38" font-size="4.4" fill="#222" text-anchor="middle" stroke="#222" stroke-width="0.12">120</text>
<line x1="283.0" y1="373" x2="283.0" y2="370.5" stroke="#333" stroke-width="0.8"/>
<line x1="283.0" y1="271" x2="283.0" y2="273.5" stroke="#333" stroke-width="0.8"/>
<text x="283.0" y="378.38" font-size="4.4" fill="#222" text-anchor="middle" stroke="#222" stroke-width="0.12">180</text>
<line x1="358.0" y1="373" x2="358.0" y2="370.5" stroke="#333" stroke-width="0.8"/>
<line x1="358.0" y1="271" x2="358.0" y2="273.5" stroke="#333" stroke-width="0.8"/>
<text x="358.0" y="378.38" font-size="4.4" fill="#222" text-anchor="middle" stroke="#222" stroke-width="0.12">240</text>
<line x1="433.0" y1="373" x2="433.0" y2="370.5" stroke="#333" stroke-width="0.8"/>
<line x1="433.0" y1="271" x2="433.0" y2="273.5" stroke="#333" stroke-width="0.8"/>
<text x="433.0" y="378.38" font-size="4.4" fill="#222" text-anchor="middle" stroke="#222" stroke-width="0.12">300</text>
<line x1="508.0" y1="373" x2="508.0" y2="370.5" stroke="#333" stroke-width="0.8"/>
<line x1="508.0" y1="271" x2="508.0" y2="273.5" stroke="#333" stroke-width="0.8"/>
<text x="508.0" y="378.38" font-size="4.4" fill="#222" text-anchor="middle" stroke="#222" stroke-width="0.12">360</text>
<line x1="583.0" y1="373" x2="583.0" y2="370.5" stroke="#333" stroke-width="0.8"/>
<line x1="583.0" y1="271" x2="583.0" y2="273.5" stroke="#333" stroke-width="0.8"/>
<text x="583.0" y="378.38" font-size="4.4" fill="#222" text-anchor="middle" stroke="#222" stroke-width="0.12">420</text>
<text x="0" y="0" font-size="4.5" fill="#222" stroke="#222" stroke-width="0.1" transform="translate(21.4,322) rotate(-90)" text-anchor="middle" textLength="26.7" lengthAdjust="spacingAndGlyphs">Diameter [mm]</text>
<text x="324" y="384.58" font-size="4.4" fill="#222" text-anchor="middle" textLength="51" lengthAdjust="spacingAndGlyphs" stroke="#222" stroke-width="0.12">Propagation distance zp [mm]</text>
<line x1="74.4" y1="273" x2="74.4" y2="372" stroke="#909090" stroke-width="0.6" stroke-dasharray="1.2,1.2"/>
<text x="74.4" y="275.86" font-size="4.6" fill="#3030d0" text-anchor="middle" stroke="#3030d0" stroke-width="0.12">3</text>
<text x="74.4" y="280.56" font-size="4.6" fill="#30a030" text-anchor="middle" stroke="#30a030" stroke-width="0.12">3</text>
<text x="0" y="0" font-size="4.3" fill="#222" transform="translate(74.0,371.5) rotate(-90)" textLength="36" lengthAdjust="spacingAndGlyphs">Cylindrical lens: front</text>
<line x1="85.7" y1="273" x2="85.7" y2="372" stroke="#909090" stroke-width="0.6" stroke-dasharray="1.2,1.2"/>
<text x="85.7" y="275.86" font-size="4.6" fill="#3030d0" text-anchor="middle" stroke="#3030d0" stroke-width="0.12">2.91</text>
<text x="85.7" y="280.56" font-size="4.6" fill="#30a030" text-anchor="middle" stroke="#30a030" stroke-width="0.12">3</text>
<text x="0" y="0" font-size="4.3" fill="#222" transform="translate(85.3,371.5) rotate(-90)" textLength="35" lengthAdjust="spacingAndGlyphs">Cylindrical lens: back</text>
<line x1="116.7" y1="273" x2="116.7" y2="372" stroke="#909090" stroke-width="0.6" stroke-dasharray="1.2,1.2"/>
<text x="116.7" y="275.86" font-size="4.6" fill="#3030d0" text-anchor="middle" stroke="#3030d0" stroke-width="0.12">2.18</text>
<text x="116.7" y="280.56" font-size="4.6" fill="#30a030" text-anchor="middle" stroke="#30a030" stroke-width="0.12">3.01</text>
<text x="0" y="0" font-size="4.3" fill="#222" transform="translate(116.3,371.5) rotate(-90)" textLength="26.5" lengthAdjust="spacingAndGlyphs">First lens: front</text>
<line x1="128.7" y1="273" x2="128.7" y2="372" stroke="#909090" stroke-width="0.6" stroke-dasharray="1.2,1.2"/>
<text x="128.7" y="275.86" font-size="4.6" fill="#3030d0" text-anchor="middle" stroke="#3030d0" stroke-width="0.12">1.84</text>
<text x="128.7" y="280.56" font-size="4.6" fill="#30a030" text-anchor="middle" stroke="#30a030" stroke-width="0.12">2.81</text>
<text x="0" y="0" font-size="4.3" fill="#222" transform="translate(128.29999999999998,371.5) rotate(-90)" textLength="25.5" lengthAdjust="spacingAndGlyphs">First lens: back</text>
<line x1="475.5" y1="273" x2="475.5" y2="372" stroke="#909090" stroke-width="0.6" stroke-dasharray="1.2,1.2"/>
<text x="475.5" y="275.86" font-size="4.6" fill="#3030d0" text-anchor="middle" stroke="#3030d0" stroke-width="0.12">2.04</text>
<text x="475.5" y="280.56" font-size="4.6" fill="#30a030" text-anchor="middle" stroke="#30a030" stroke-width="0.12">0.885</text>
<text x="0" y="0" font-size="4.3" fill="#222" transform="translate(475.1,371.5) rotate(-90)" textLength="11" lengthAdjust="spacingAndGlyphs">Screen</text>
<line x1="274.8" y1="273" x2="274.8" y2="372" stroke="#a0a0a0" stroke-width="1.3"/>
<text x="274.8" y="275.86" font-size="4.6" fill="#3030d0" text-anchor="middle" stroke="#3030d0" stroke-width="0.12">6.32</text>
<text x="274.8" y="280.56" font-size="4.6" fill="#30a030" text-anchor="middle" stroke="#30a030" stroke-width="0.12">3.96</text>
<text x="0" y="0" font-size="4.3" fill="#111" font-weight="bold" transform="translate(274.3,371.5) rotate(-90)" textLength="37" lengthAdjust="spacingAndGlyphs">Second lens: front</text>
<line x1="291.2" y1="273" x2="291.2" y2="372" stroke="#a0a0a0" stroke-width="1.3"/>
<text x="291.2" y="275.86" font-size="4.6" fill="#3030d0" text-anchor="middle" stroke="#3030d0" stroke-width="0.12">6.38</text>
<text x="291.2" y="280.56" font-size="4.6" fill="#30a030" text-anchor="middle" stroke="#30a030" stroke-width="0.12">4.11</text>
<text x="0" y="0" font-size="4.3" fill="#111" font-weight="bold" transform="translate(290.7,371.5) rotate(-90)" textLength="37" lengthAdjust="spacingAndGlyphs">Second lens: back</text>
<polyline points="58.00,303.80 85.70,303.80" fill="none" stroke="#8a9ab8" stroke-width="1.0"/>
<polyline points="58.00,340.20 85.70,340.20" fill="none" stroke="#8a9ab8" stroke-width="1.0"/>
<polyline points="85.70,303.80 100.00,304.80 116.70,307.70 128.70,310.20" fill="none" stroke="#6c5ce0" stroke-width="1.0"/>
<polyline points="85.70,340.20 100.00,339.20 116.70,336.30 128.70,333.80" fill="none" stroke="#6c5ce0" stroke-width="1.0"/>
<polyline points="128.70,310.58 132.35,311.79 136.00,313.00 139.66,314.21 143.31,315.41 146.96,316.62 150.61,317.81 154.27,318.99 157.92,320.13 161.57,321.07 165.22,320.91 168.88,319.89 172.53,318.74 176.18,317.55 179.83,316.35 183.49,315.15 187.14,313.95 190.79,312.74 194.44,311.53 198.10,310.32 201.75,309.11 205.40,307.90 209.06,306.69 212.71,305.48 216.36,304.27 220.01,303.05 223.66,301.84 227.32,300.63 230.97,299.42 234.62,298.21 238.28,297.00 241.93,295.78 245.58,294.57 249.23,293.36 252.88,292.15 256.54,290.94 260.19,289.72 263.84,288.51 267.50,287.30 271.15,286.09 274.80,284.87" fill="none" stroke="#6c5ce0" stroke-width="1.0"/>
<polyline points="128.70,333.42 132.35,332.21 136.00,331.00 139.66,329.79 143.31,328.59 146.96,327.38 150.61,326.19 154.27,325.01 157.92,323.87 161.57,322.93 165.22,323.09 168.88,324.11 172.53,325.26 176.18,326.45 179.83,327.65 183.49,328.85 187.14,330.05 190.79,331.26 194.44,332.47 198.10,333.68 201.75,334.89 205.40,336.10 209.06,337.31 212.71,338.52 216.36,339.73 220.01,340.95 223.66,342.16 227.32,343.37 230.97,344.58 234.62,345.79 238.28,347.00 241.93,348.22 245.58,349.43 249.23,350.64 252.88,351.85 256.54,353.06 260.19,354.28 263.84,355.49 267.50,356.70 271.15,357.91 274.80,359.13" fill="none" stroke="#6c5ce0" stroke-width="1.0"/>
<polyline points="274.80,284.00 283.00,283.80 291.20,284.00" fill="none" stroke="#a49cf0" stroke-width="0.9"/>
<polyline points="274.80,360.00 283.00,360.20 291.20,360.00" fill="none" stroke="#a49cf0" stroke-width="0.9"/>
<polyline points="291.20,283.88 298.95,285.99 306.70,288.10 314.46,290.21 322.21,292.32 329.96,294.42 337.71,296.53 345.47,298.64 353.22,300.75 360.97,302.85 368.72,304.96 376.48,307.07 384.23,309.17 391.98,311.28 399.74,313.38 407.49,315.47 415.24,317.56 422.99,319.60 430.75,321.19 438.50,319.89 446.25,317.86 454.00,315.77 461.75,313.68 469.51,311.58 477.26,309.47 485.01,307.37 492.76,305.26 500.52,303.16 508.27,301.05 516.02,298.94 523.77,296.83 531.53,294.73 539.28,292.62 547.03,290.51 554.78,288.40 562.54,286.29 570.29,284.19 578.04,282.08 585.79,279.97 593.55,277.86 601.30,275.75" fill="none" stroke="#a49cf0" stroke-width="0.9"/>
<polyline points="291.20,360.12 298.95,358.01 306.70,355.90 314.46,353.79 322.21,351.68 329.96,349.58 337.71,347.47 345.47,345.36 353.22,343.25 360.97,341.15 368.72,339.04 376.48,336.93 384.23,334.83 391.98,332.72 399.74,330.62 407.49,328.53 415.24,326.44 422.99,324.40 430.75,322.81 438.50,324.11 446.25,326.14 454.00,328.23 461.75,330.32 469.51,332.42 477.26,334.53 485.01,336.63 492.76,338.74 500.52,340.84 508.27,342.95 516.02,345.06 523.77,347.17 531.53,349.27 539.28,351.38 547.03,353.49 554.78,355.60 562.54,357.71 570.29,359.81 578.04,361.92 585.79,364.03 593.55,366.14 601.30,368.25" fill="none" stroke="#a49cf0" stroke-width="0.9"/>
<polyline points="85.70,303.80 116.70,303.80 128.70,304.40" fill="none" stroke="#a8d4a8" stroke-width="0.9"/>
<polyline points="85.70,340.20 116.70,340.20 128.70,339.60" fill="none" stroke="#a8d4a8" stroke-width="0.9"/>
<polyline points="128.70,303.68 132.35,304.77 136.00,305.86 139.66,306.95 143.31,308.03 146.96,309.12 150.61,310.21 154.27,311.30 157.92,312.38 161.57,313.47 165.22,314.55 168.88,315.63 172.53,316.71 176.18,317.78 179.83,318.84 183.49,319.86 187.14,320.76 190.79,321.07 194.44,320.40 198.10,319.42 201.75,318.38 205.40,317.32 209.06,316.24 212.71,315.16 216.36,314.08 220.01,313.00 223.66,311.91 227.32,310.82 230.97,309.74 234.62,308.65 238.28,307.56 241.93,306.47 245.58,305.38 249.23,304.30 252.88,303.21 256.54,302.12 260.19,301.03 263.84,299.94 267.50,298.85 271.15,297.76 274.80,296.67" fill="none" stroke="#70b870" stroke-width="1.0"/>
<polyline points="128.70,340.32 132.35,339.23 136.00,338.14 139.66,337.05 143.31,335.97 146.96,334.88 150.61,333.79 154.27,332.70 157.92,331.62 161.57,330.53 165.22,329.45 168.88,328.37 172.53,327.29 176.18,326.22 179.83,325.16 183.49,324.14 187.14,323.24 190.79,322.93 194.44,323.60 198.10,324.58 201.75,325.62 205.40,326.68 209.06,327.76 212.71,328.84 216.36,329.92 220.01,331.00 223.66,332.09 227.32,333.18 230.97,334.26 234.62,335.35 238.28,336.44 241.93,337.53 245.58,338.62 249.23,339.70 252.88,340.79 256.54,341.88 260.19,342.97 263.84,344.06 267.50,345.15 271.15,346.24 274.80,347.33" fill="none" stroke="#70b870" stroke-width="1.0"/>
<polyline points="274.80,297.40 283.00,296.80 291.20,297.10" fill="none" stroke="#a8d4a8" stroke-width="0.9"/>
<polyline points="274.80,346.60 283.00,347.20 291.20,346.90" fill="none" stroke="#a8d4a8" stroke-width="0.9"/>
<polyline points="291.20,297.36 298.95,298.20 306.70,299.04 314.46,299.88 322.21,300.72 329.96,301.56 337.71,302.40 345.47,303.23 353.22,304.07 360.97,304.90 368.72,305.73 376.48,306.56 384.23,307.39 391.98,308.22 399.74,309.04 407.49,309.86 415.24,310.67 422.99,311.48 430.75,312.28 438.50,313.08 446.25,313.86 454.00,314.63 461.75,315.38 469.51,316.10 477.26,316.78 485.01,317.41 492.76,317.95 500.52,318.38 508.27,318.64 516.02,318.69 523.77,318.54 531.53,318.19 539.28,317.71 547.03,317.12 554.78,316.46 562.54,315.76 570.29,315.03 578.04,314.27 585.79,313.49 593.55,312.71 601.30,311.91" fill="none" stroke="#a8d4a8" stroke-width="0.9"/>
<polyline points="291.20,346.64 298.95,345.80 306.70,344.96 314.46,344.12 322.21,343.28 329.96,342.44 337.71,341.60 345.47,340.77 353.22,339.93 360.97,339.10 368.72,338.27 376.48,337.44 384.23,336.61 391.98,335.78 399.74,334.96 407.49,334.14 415.24,333.33 422.99,332.52 430.75,331.72 438.50,330.92 446.25,330.14 454.00,329.37 461.75,328.62 469.51,327.90 477.26,327.22 485.01,326.59 492.76,326.05 500.52,325.62 508.27,325.36 516.02,325.31 523.77,325.46 531.53,325.81 539.28,326.29 547.03,326.88 554.78,327.54 562.54,328.24 570.29,328.97 578.04,329.73 585.79,330.51 593.55,331.29 601.30,332.09" fill="none" stroke="#a8d4a8" stroke-width="0.9"/>
<line x1="157.9" y1="322" x2="165.70000000000002" y2="322" stroke="#6c5ce0" stroke-width="0.6"/>
<line x1="157.9" y1="320.4" x2="157.9" y2="323.6" stroke="#6c5ce0" stroke-width="0.6"/>
<line x1="161.8" y1="320.4" x2="161.8" y2="323.6" stroke="#6c5ce0" stroke-width="0.6"/>
<line x1="165.70000000000002" y1="320.4" x2="165.70000000000002" y2="323.6" stroke="#6c5ce0" stroke-width="0.6"/>
<line x1="184.2" y1="322" x2="195.0" y2="322" stroke="#70b870" stroke-width="0.6"/>
<line x1="184.2" y1="320.4" x2="184.2" y2="323.6" stroke="#70b870" stroke-width="0.6"/>
<line x1="189.6" y1="320.4" x2="189.6" y2="323.6" stroke="#70b870" stroke-width="0.6"/>
<line x1="195.0" y1="320.4" x2="195.0" y2="323.6" stroke="#70b870" stroke-width="0.6"/>
<line x1="426.3" y1="322" x2="436.3" y2="322" stroke="#6c5ce0" stroke-width="0.6"/>
<line x1="426.3" y1="320.4" x2="426.3" y2="323.6" stroke="#6c5ce0" stroke-width="0.6"/>
<line x1="431.3" y1="320.4" x2="431.3" y2="323.6" stroke="#6c5ce0" stroke-width="0.6"/>
<line x1="436.3" y1="320.4" x2="436.3" y2="323.6" stroke="#6c5ce0" stroke-width="0.6"/>
<line x1="483.4" y1="318" x2="483.4" y2="326" stroke="#a8d4a8" stroke-width="0.7"/>
<line x1="514.2" y1="318" x2="514.2" y2="326" stroke="#a8d4a8" stroke-width="0.7"/>
<line x1="544" y1="318" x2="544" y2="326" stroke="#a8d4a8" stroke-width="0.7"/>
<line x1="258.7" y1="281" x2="258.7" y2="372" stroke="#e89090" stroke-width="1.6"/>
<rect x="250.9" y="271.9" width="17.7" height="8.7" fill="#ffffff" stroke="#d85a5a" stroke-width="0.8"/>
<text x="259.7" y="275.81" font-size="4.2" fill="#3030d0" text-anchor="middle" textLength="15" lengthAdjust="spacingAndGlyphs" stroke="#3030d0" stroke-width="0.12">5.41999</text>
<text x="259.7" y="280.21" font-size="4.2" fill="#30a030" text-anchor="middle" textLength="15" lengthAdjust="spacingAndGlyphs" stroke="#30a030" stroke-width="0.12">3.21048</text>
<rect x="250.8" y="372.9" width="15.7" height="5.7" fill="#ffffff" stroke="#d85a5a" stroke-width="0.8"/>
<text x="259" y="376.51" font-size="4.2" fill="#222" text-anchor="middle" textLength="12" lengthAdjust="spacingAndGlyphs" stroke="#222" stroke-width="0.12">160.32</text>
<circle cx="258.7" cy="289.3" r="1.6" fill="#6c5ce0"/>
<circle cx="258.7" cy="302.3" r="1.6" fill="#70b870"/>
<circle cx="258.7" cy="341.7" r="1.6" fill="#70b870"/>
<circle cx="258.7" cy="354.7" r="1.6" fill="#6c5ce0"/>
<path d="M257 307 l0 -3 q1 -1 2 0 l0 2 l3 0 q1 0 1 1 l0 3 q0 2 -2 2 l-3 0 q-2 0 -2 -2 z" fill="#fff" stroke="#333" stroke-width="0.6"/>
<rect x="147.3" y="301.7" width="29.0" height="15.0" rx="1" fill="#ffffff" stroke="#3030c0" stroke-width="0.8"/>
<text x="148.6" y="306.91" font-size="4.2" fill="#3030c0" textLength="26" lengthAdjust="spacingAndGlyphs" stroke="#3030c0" stroke-width="0.05">d0=181,81 µm</text>
<text x="148.6" y="311.46" font-size="4.2" fill="#3030c0" textLength="24.3" lengthAdjust="spacingAndGlyphs" stroke="#3030c0" stroke-width="0.05">zR=2,596 mm</text>
<text x="148.6" y="316.01" font-size="4.2" fill="#3030c0" textLength="23.9" lengthAdjust="spacingAndGlyphs" stroke="#3030c0" stroke-width="0.05">zP=82,77 mm</text>
<rect x="173.9" y="326.5" width="31.7" height="15.3" rx="1" fill="#ffffff" stroke="#30a030" stroke-width="0.8"/>
<text x="175.2" y="331.71" font-size="4.2" fill="#30a030" textLength="28" lengthAdjust="spacingAndGlyphs" stroke="#30a030" stroke-width="0.05">d0=219,519 µm</text>
<text x="175.2" y="336.26" font-size="4.2" fill="#30a030" textLength="24.5" lengthAdjust="spacingAndGlyphs" stroke="#30a030" stroke-width="0.05">zR=3,785 mm</text>
<text x="175.2" y="340.81" font-size="4.2" fill="#30a030" textLength="28" lengthAdjust="spacingAndGlyphs" stroke="#30a030" stroke-width="0.05">zP=104,898 mm</text>
<rect x="415.79999999999995" y="301.59999999999997" width="31.400000000000002" height="15.3" rx="1" fill="#ffffff" stroke="#3030c0" stroke-width="0.8"/>
<text x="417.09999999999997" y="306.81" font-size="4.2" fill="#3030c0" textLength="28.8" lengthAdjust="spacingAndGlyphs" stroke="#3030c0" stroke-width="0.05">d0=223,263 µm</text>
<text x="417.09999999999997" y="311.36" font-size="4.2" fill="#3030c0" textLength="22.8" lengthAdjust="spacingAndGlyphs" stroke="#3030c0" stroke-width="0.05">zR=3,915 mm</text>
<text x="417.09999999999997" y="315.91" font-size="4.2" fill="#3030c0" textLength="28.8" lengthAdjust="spacingAndGlyphs" stroke="#3030c0" stroke-width="0.05">zP=297,793 mm</text>
<rect x="497.9" y="328.09999999999997" width="31.999999999999996" height="16.5" rx="1" fill="#ffffff" stroke="#30a030" stroke-width="0.8"/>
<text x="499.2" y="333.31" font-size="4.2" fill="#30a030" textLength="29.8" lengthAdjust="spacingAndGlyphs" stroke="#30a030" stroke-width="0.05">d0=554,193 µm</text>
<text x="499.2" y="337.86" font-size="4.2" fill="#30a030" textLength="26" lengthAdjust="spacingAndGlyphs" stroke="#30a030" stroke-width="0.05">zR=24,122 mm</text>
<text x="499.2" y="342.41" font-size="4.2" fill="#30a030" textLength="29" lengthAdjust="spacingAndGlyphs" stroke="#30a030" stroke-width="0.05">zP=363,444 mm</text>
<text x="18.1" y="391.46" font-size="4.6" fill="#111" font-weight="bold" textLength="12.2" lengthAdjust="spacingAndGlyphs" stroke="#111" stroke-width="0.1">Show:</text>
<rect x="34.4" y="387.3" width="4.4" height="4.4" fill="#ffffff" stroke="#444" stroke-width="0.6"/>
<polyline points="35.00,389.50 36.20,391.00 38.30,387.90" fill="none" stroke="#333" stroke-width="0.7"/>
<text x="40.8" y="391.53" font-size="4.8" fill="#2020e0" font-weight="bold" textLength="21.7" lengthAdjust="spacingAndGlyphs" stroke="#2020e0" stroke-width="0.1">horizontal</text>
<rect x="67.7" y="387.3" width="4.4" height="4.4" fill="#ffffff" stroke="#444" stroke-width="0.6"/>
<polyline points="68.30,389.50 69.50,391.00 71.60,387.90" fill="none" stroke="#333" stroke-width="0.7"/>
<text x="74.4" y="391.53" font-size="4.8" fill="#20a020" font-weight="bold" textLength="16.6" lengthAdjust="spacingAndGlyphs" stroke="#20a020" stroke-width="0.1">vertical</text>
<rect x="96.2" y="387.6" width="4.4" height="4.4" fill="#ffffff" stroke="#444" stroke-width="0.6"/>
<text x="102.9" y="391.53" font-size="4.8" fill="#d020c0" font-weight="bold" textLength="21.4" lengthAdjust="spacingAndGlyphs" stroke="#d020c0" stroke-width="0.1">azimuthal</text>
<rect x="126.39999999999999" y="386.6" width="23.799999999999997" height="6.4" fill="#ffffff" stroke="#a8a8a8" stroke-width="0.6"/>
<text x="143" y="391.38" font-size="4.4" fill="#3030d0" text-anchor="end" textLength="7.5" lengthAdjust="spacingAndGlyphs" stroke="#3030d0" stroke-width="0.12">45,0</text>
<line x1="145.2" y1="386.8" x2="145.2" y2="392.8" stroke="#ccc" stroke-width="0.4"/>
<polygon points="146.60,389.40 149.00,389.40 147.80,387.70" fill="#333"/>
<polygon points="146.60,390.40 149.00,390.40 147.80,392.10" fill="#333"/>
<rect x="151.85" y="386.55" width="10.5" height="6.5" fill="#ffffff" stroke="#d8d8d8" stroke-width="0.5"/>
<text x="156.8" y="392.40" font-size="5" fill="#222" text-anchor="middle" stroke="#222" stroke-width="0.12">°</text>
<rect x="166.60000000000002" y="387.6" width="4.4" height="4.4" fill="#ffffff" stroke="#444" stroke-width="0.6"/>
<polyline points="167.20,389.80 168.40,391.30 170.50,388.20" fill="none" stroke="#333" stroke-width="0.7"/>
<text x="172.9" y="391.46" font-size="4.6" fill="#111" textLength="8.8" lengthAdjust="spacingAndGlyphs" stroke="#111" stroke-width="0.12">Label</text>
<rect x="188.3" y="387.6" width="4.4" height="4.4" fill="#ffffff" stroke="#444" stroke-width="0.6"/>
<polyline points="188.90,389.80 190.10,391.30 192.20,388.20" fill="none" stroke="#333" stroke-width="0.7"/>
<text x="194.8" y="391.46" font-size="4.6" fill="#111" textLength="18.5" lengthAdjust="spacingAndGlyphs" stroke="#111" stroke-width="0.12">waist data</text>
<rect x="219.3" y="387.6" width="4.4" height="4.4" fill="#ffffff" stroke="#444" stroke-width="0.6"/>
<polyline points="219.90,389.80 221.10,391.30 223.20,388.20" fill="none" stroke="#333" stroke-width="0.7"/>
<text x="225.4" y="391.46" font-size="4.6" fill="#111" textLength="30.6" lengthAdjust="spacingAndGlyphs" stroke="#111" stroke-width="0.12">alternative paths</text>
<line x1="262" y1="386" x2="262" y2="395" stroke="#c8c8c8" stroke-width="0.6"/>
<rect x="266.90000000000003" y="387.6" width="4.4" height="4.4" fill="#ffffff" stroke="#444" stroke-width="0.6"/>
<text x="273.3" y="391.46" font-size="4.6" fill="#111" textLength="19.6" lengthAdjust="spacingAndGlyphs" stroke="#111" stroke-width="0.12">Auto select</text>
<rect x="617.8" y="386.8" width="11.9" height="5.4" fill="#f4f4f4" stroke="#a8a8a8" stroke-width="0.6"/>
<text x="623.7" y="390.97" font-size="3.8" fill="#111" text-anchor="middle" stroke="#111" stroke-width="0.12">save</text>
<rect x="635" y="35" width="79" height="6.5" fill="#d9d9d9"/>
<text x="639" y="40.23" font-size="4.8" fill="#222" textLength="17.4" lengthAdjust="spacingAndGlyphs" stroke="#222" stroke-width="0.12">Object list</text>
<rect x="704.5" y="37" width="2.8" height="2.8" fill="none" stroke="#333" stroke-width="0.6"/><path d="M705.5 36.2 h2.8 v2.8" fill="none" stroke="#333" stroke-width="0.6"/>
<line x1="709.5" y1="36.5" x2="713" y2="40" stroke="#333" stroke-width="0.7"/>
<line x1="713" y1="36.5" x2="709.5" y2="40" stroke="#333" stroke-width="0.7"/>
<rect x="635" y="41.5" width="79" height="15.5" fill="#f0f0f0"/>
<polyline points="639.00,48.30 641.00,50.30 643.00,48.30" fill="none" stroke="#1b8fd8" stroke-width="1.1"/>
<rect x="647.25" y="45.25" width="5.0" height="6.5" fill="#f4f4f4" stroke="#c8c8c8" stroke-width="0.5"/>
<polyline points="648.80,46.60 650.60,48.50 648.80,50.40" fill="none" stroke="#1b8fd8" stroke-width="1.1"/>
<line x1="654.2" y1="42" x2="654.2" y2="57" stroke="#d0d0d0" stroke-width="0.5"/>
<rect x="657.25" y="43.75" width="5.9" height="5.7" fill="#f4f4f4" stroke="#c8c8c8" stroke-width="0.5"/>
<line x1="660.2" y1="45" x2="660.2" y2="49" stroke="#1b8fd8" stroke-width="1"/>
<polygon points="658.50,46.30 661.90,46.30 660.20,44.20" fill="#1b8fd8"/>
<rect x="665.65" y="43.75" width="5.7" height="5.7" fill="#f4f4f4" stroke="#c8c8c8" stroke-width="0.5"/>
<line x1="668.5" y1="44.2" x2="668.5" y2="48" stroke="#1b8fd8" stroke-width="1"/>
<polygon points="666.80,47.00 670.20,47.00 668.50,49.20" fill="#1b8fd8"/>
<rect x="656.6999999999999" y="52.8" width="3.9999999999999996" height="3.9999999999999996" fill="#ffffff" stroke="#555" stroke-width="0.6"/>
<text x="662.6" y="56.46" font-size="4.6" fill="#222" textLength="12.4" lengthAdjust="spacingAndGlyphs" stroke="#222" stroke-width="0.12">sorted</text>
<line x1="677.2" y1="42" x2="677.2" y2="57" stroke="#d0d0d0" stroke-width="0.5"/>
<rect x="679.65" y="42.65" width="30.3" height="6.3" fill="#e6e6e6" stroke="#c4c4c4" stroke-width="0.5"/>
<text x="681" y="47.38" font-size="4.4" fill="#222" textLength="18" lengthAdjust="spacingAndGlyphs" stroke="#222" stroke-width="0.12">-unfiltered-</text>
<polygon points="704.80,45.00 707.60,45.00 706.20,46.90" fill="#222"/>
<rect x="679.6999999999999" y="52.8" width="3.9999999999999996" height="3.9999999999999996" fill="#ffffff" stroke="#555" stroke-width="0.6"/>
<text x="685" y="56.46" font-size="4.6" fill="#222" textLength="23" lengthAdjust="spacingAndGlyphs" stroke="#222" stroke-width="0.12">hide inactive</text>
<rect x="637" y="57" width="77" height="67" fill="#ffffff"/>
<rect x="644.5999999999999" y="60.0" width="4.4" height="4.4" fill="#ffffff" stroke="#666" stroke-width="0.6"/>
<polyline points="645.20,62.20 646.40,63.70 648.50,60.60" fill="none" stroke="#333" stroke-width="0.7"/>
<rect x="651.4" y="61.5" width="2.5" height="1.2" fill="#333"/>
<rect x="654" y="61.1" width="3.6" height="2" fill="#8ad0f0"/>
<text x="660" y="63.83" font-size="4.8" fill="#111" font-weight="bold" textLength="13.9" lengthAdjust="spacingAndGlyphs" stroke="#111" stroke-width="0.1">Source</text>
<rect x="644.5999999999999" y="66.69999999999999" width="4.4" height="4.4" fill="#ffffff" stroke="#666" stroke-width="0.6"/>
<polyline points="645.20,68.90 646.40,70.40 648.50,67.30" fill="none" stroke="#333" stroke-width="0.7"/>
<ellipse cx="653" cy="68.8" rx="1.6" ry="2.7" fill="none" stroke="#111" stroke-width="0.9"/>
<polygon points="655.50,68.80 657.80,67.40 657.80,70.20" fill="#1b8fd8"/>
<text x="660" y="70.53" font-size="4.8" fill="#111" font-weight="bold" textLength="18.4" lengthAdjust="spacingAndGlyphs" stroke="#111" stroke-width="0.1">First lens</text>
<rect x="643" y="72.3" width="71" height="6.4" fill="#3a78d8"/>
<rect x="644.5999999999999" y="73.39999999999999" width="4.4" height="4.4" fill="#ffffff" stroke="#ddd" stroke-width="0.6"/>
<polyline points="645.20,75.60 646.40,77.10 648.50,74.00" fill="none" stroke="#333" stroke-width="0.7"/>
<ellipse cx="653" cy="75.5" rx="1.6" ry="2.7" fill="none" stroke="#fff" stroke-width="0.9"/>
<polygon points="655.50,75.50 657.80,74.10 657.80,76.90" fill="#1b8fd8"/>
<text x="660" y="77.23" font-size="4.8" fill="#fff" font-weight="bold" textLength="22.5" lengthAdjust="spacingAndGlyphs" stroke="#fff" stroke-width="0.1">Second Lens</text>
<rect x="644.5999999999999" y="80.1" width="4.4" height="4.4" fill="#ffffff" stroke="#666" stroke-width="0.6"/>
<polyline points="645.20,82.30 646.40,83.80 648.50,80.70" fill="none" stroke="#333" stroke-width="0.7"/>
<rect x="651" y="80.4" width="6.5" height="3.6" fill="#111"/>
<rect x="653.5" y="81.7" width="2" height="1" fill="#fff"/>
<text x="660" y="83.93" font-size="4.8" fill="#111" font-weight="bold" textLength="13.5" lengthAdjust="spacingAndGlyphs" stroke="#111" stroke-width="0.1">Screen</text>
<rect x="644.5999999999999" y="86.89999999999999" width="4.4" height="4.4" fill="#ffffff" stroke="#666" stroke-width="0.6"/>
<polyline points="645.20,89.10 646.40,90.60 648.50,87.50" fill="none" stroke="#333" stroke-width="0.7"/>
<ellipse cx="653" cy="89" rx="1.6" ry="2.7" fill="none" stroke="#111" stroke-width="0.9"/>
<polygon points="655.50,89.00 657.80,87.60 657.80,90.40" fill="#1b8fd8"/>
<text x="660" y="90.73" font-size="4.8" fill="#111" font-weight="bold" textLength="28" lengthAdjust="spacingAndGlyphs" stroke="#111" stroke-width="0.1">Cylindrical lens</text>
<rect x="644.5999999999999" y="93.69999999999999" width="4.4" height="4.4" fill="#ffffff" stroke="#666" stroke-width="0.6"/>
<rect x="650.5" y="93.3" width="7" height="5" fill="#b8e0f4"/>
<ellipse cx="652.7" cy="95.8" rx="1" ry="2" fill="none" stroke="#666" stroke-width="0.5"/>
<ellipse cx="655.3" cy="95.8" rx="1" ry="2" fill="none" stroke="#666" stroke-width="0.5"/>
<polyline points="639.30,94.50 640.50,95.80 639.30,97.10" fill="none" stroke="#888" stroke-width="0.6"/>
<text x="660" y="97.53" font-size="4.8" fill="#888" textLength="14.5" lengthAdjust="spacingAndGlyphs" stroke="#888" stroke-width="0.12">Group 1</text>
<rect x="635" y="123.8" width="79" height="1.7" fill="#f0f0f0"/>
<rect x="635" y="125.5" width="79" height="7.5" fill="#dcdcdc"/>
<text x="638.5" y="131.23" font-size="4.8" fill="#222" textLength="28.5" lengthAdjust="spacingAndGlyphs" stroke="#222" stroke-width="0.12">Object Properties</text>
<text x="703" y="131.04" font-size="4" fill="#333" stroke="#333" stroke-width="0.12">⧉</text>
<line x1="709" y1="127.8" x2="712.5" y2="131.3" stroke="#333" stroke-width="0.7"/>
<line x1="712.5" y1="127.8" x2="709" y2="131.3" stroke="#333" stroke-width="0.7"/>
<rect x="635" y="132.5" width="73.5" height="260.5" fill="#f0f0f0"/>
<rect x="708.5" y="132.5" width="5.5" height="260.5" fill="#f0f0f0"/>
<polyline points="709.80,137.00 711.20,135.60 712.60,137.00" fill="none" stroke="#333" stroke-width="0.6"/>
<rect x="709.4" y="144" width="4" height="181" fill="#cdcdcd"/>
<polyline points="709.60,383.60 711.00,385.00 712.40,383.60" fill="none" stroke="#333" stroke-width="0.6"/>
<rect x="638.25" y="134.25" width="5.5" height="6.5" fill="#dcecf8" stroke="#9ac4e8" stroke-width="0.5"/>
<circle cx="641" cy="138" r="1" fill="#111"/>
<circle cx="651" cy="138" r="1" fill="#111"/>
<path d="M648.5 135.5 q2.5 -2 5 0" fill="none" stroke="#36a8e8" stroke-width="0.8"/>
<rect x="657.5" y="136.5" width="4" height="3.5" fill="#1b8fd8"/>
<path d="M658.3 136.5 v-1 q1.2 -1.8 2.4 0 v1" fill="none" stroke="#333" stroke-width="0.6"/>
<rect x="679.5" y="136.5" width="4" height="3.5" fill="#1b8fd8"/>
<path d="M680.3 136.5 v-1 q1.2 -1.8 2.4 0 v1" fill="none" stroke="#333" stroke-width="0.6"/>
<ellipse cx="670.5" cy="137.8" rx="8" ry="4.5" fill="#e4e4e4"/>
<circle cx="667" cy="137.8" r="2" fill="#fff" stroke="#555" stroke-width="0.5"/>
<circle cx="674" cy="137.8" r="2" fill="#fff" stroke="#555" stroke-width="0.5"/>
<circle cx="674" cy="137.8" r="0.8" fill="#222"/>
<rect x="637.3" y="144" width="70.6" height="6.7" fill="#22ee22"/>
<circle cx="640.6999999999999" cy="147.75" r="0.9" fill="#111"/>
<text x="645.2" y="149.24" font-size="4.7" fill="#111" font-weight="bold" textLength="11" lengthAdjust="spacingAndGlyphs" stroke="#111" stroke-width="0.1">Basic</text>
<rect x="637.8" y="152.6" width="69.6" height="90.4" fill="#f0f0f0" stroke="#7ce8f0" stroke-width="0.8"/>
<rect x="637.3" y="152.6" width="70.6" height="6.7" fill="#00eef8"/>
<circle cx="640.6999999999999" cy="156.35" r="0.9" fill="#111"/>
<text x="645.2" y="157.84" font-size="4.7" fill="#111" font-weight="bold" textLength="16.4" lengthAdjust="spacingAndGlyphs" stroke="#111" stroke-width="0.1">Position</text>
<rect x="640.5" y="161.8" width="60" height="51.4" rx="1.5" fill="#e8e8e8" stroke="#90e8d8" stroke-width="0.8"/>
<rect x="640.3" y="161.6" width="60.2" height="6.7" fill="#80f0d8"/>
<rect x="641.5" y="162.6" width="4.5" height="5.2" fill="#cfe4f6"/>
<circle cx="643.6999999999999" cy="165.35" r="0.9" fill="#111"/>
<text x="648.2" y="166.84" font-size="4.7" fill="#111" font-weight="bold" textLength="10.4" lengthAdjust="spacingAndGlyphs" stroke="#111" stroke-width="0.1">Local</text>
<rect x="642" y="170.2" width="53.5" height="31.6" rx="1.5" fill="#f0f0f0" stroke="#f0a0f0" stroke-width="0.8"/>
<rect x="641.8" y="170" width="53.7" height="6.5" fill="#f490ec"/>
<rect x="643.0" y="171" width="4.5" height="5.0" fill="#cfe4f6"/>
<circle cx="645.1999999999999" cy="173.65" r="0.9" fill="#111"/>
<text x="649" y="175.14" font-size="4.7" fill="#111" font-weight="bold" textLength="15" lengthAdjust="spacingAndGlyphs" stroke="#111" stroke-width="0.1">Spatial</text>
<text x="643.5" y="184.05" font-size="4.3" fill="#222" textLength="5.5" lengthAdjust="spacingAndGlyphs" stroke="#222" stroke-width="0.12">x =</text>
<rect x="651.95" y="179.75" width="29.5" height="5.5" fill="#ffffff" stroke="#b0b0b0" stroke-width="0.5"/>
<text x="674" y="184.05" font-size="4.3" fill="#3030d0" text-anchor="end" stroke="#3030d0" stroke-width="0.12">0,000</text>
<line x1="675.5" y1="179.9" x2="675.5" y2="185.1" stroke="#ccc" stroke-width="0.4"/>
<polygon points="677.30,181.90 679.30,181.90 678.30,180.50" fill="#333"/>
<polygon points="677.30,183.10 679.30,183.10 678.30,184.50" fill="#333"/>
<text x="685" y="184.05" font-size="4.3" fill="#222" textLength="6" lengthAdjust="spacingAndGlyphs" stroke="#222" stroke-width="0.12">mm</text>
<text x="643.5" y="191.55" font-size="4.3" fill="#222" textLength="5.5" lengthAdjust="spacingAndGlyphs" stroke="#222" stroke-width="0.12">y =</text>
<rect x="651.95" y="187.25" width="29.5" height="5.5" fill="#ffffff" stroke="#b0b0b0" stroke-width="0.5"/>
<text x="674" y="191.55" font-size="4.3" fill="#3030d0" text-anchor="end" stroke="#3030d0" stroke-width="0.12">0,000</text>
<line x1="675.5" y1="187.4" x2="675.5" y2="192.6" stroke="#ccc" stroke-width="0.4"/>
<polygon points="677.30,189.40 679.30,189.40 678.30,188.00" fill="#333"/>
<polygon points="677.30,190.60 679.30,190.60 678.30,192.00" fill="#333"/>
<text x="685" y="191.55" font-size="4.3" fill="#222" textLength="6" lengthAdjust="spacingAndGlyphs" stroke="#222" stroke-width="0.12">mm</text>
<text x="643.5" y="199.35" font-size="4.3" fill="#222" textLength="5.5" lengthAdjust="spacingAndGlyphs" stroke="#222" stroke-width="0.12">z =</text>
<rect x="651.95" y="195.05" width="29.5" height="5.5" fill="#ffffff" stroke="#b0b0b0" stroke-width="0.5"/>
<text x="674" y="199.35" font-size="4.3" fill="#3030d0" text-anchor="end" stroke="#3030d0" stroke-width="0.12">57,614</text>
<line x1="675.5" y1="195.20000000000002" x2="675.5" y2="200.4" stroke="#ccc" stroke-width="0.4"/>
<polygon points="677.30,197.20 679.30,197.20 678.30,195.80" fill="#333"/>
<polygon points="677.30,198.40 679.30,198.40 678.30,199.80" fill="#333"/>
<text x="685" y="199.35" font-size="4.3" fill="#222" textLength="6" lengthAdjust="spacingAndGlyphs" stroke="#222" stroke-width="0.12">mm</text>
<rect x="641.5" y="205.4" width="54.1" height="6.6" fill="#e6c8f6"/>
<rect x="642.7" y="206.4" width="4.5" height="5.1" fill="#cfe4f6"/>
<circle cx="644.9" cy="209.10000000000002" r="0.9" fill="#111"/>
<text x="649.9" y="210.59" font-size="4.7" fill="#111" font-weight="bold" textLength="15.8" lengthAdjust="spacingAndGlyphs" stroke="#111" stroke-width="0.1">Angular</text>
<rect x="639.6" y="215.1" width="60.6" height="6.5" fill="#a4f078"/>
<circle cx="643.0" cy="218.75" r="0.9" fill="#111"/>
<text x="648" y="220.24" font-size="4.7" fill="#111" font-weight="bold" textLength="13" lengthAdjust="spacingAndGlyphs" stroke="#111" stroke-width="0.1">Global</text>
<rect x="640" y="224" width="60" height="17" rx="1.5" fill="#f0f0f0" stroke="#d0d0d0" stroke-width="0.8"/>
<rect x="639.6" y="223.9" width="60.6" height="6.1" fill="#e0e0e0"/>
<circle cx="643.0" cy="227.35000000000002" r="0.9" fill="#111"/>
<text x="648" y="228.84" font-size="4.7" fill="#111" font-weight="bold" textLength="17.7" lengthAdjust="spacingAndGlyphs" stroke="#111" stroke-width="0.1">Distance</text>
<text x="641" y="237.15" font-size="4.3" fill="#222" textLength="10" lengthAdjust="spacingAndGlyphs" stroke="#222" stroke-width="0.12">Dist.=</text>
<rect x="655.75" y="232.85" width="28.5" height="5.5" fill="#ffffff" stroke="#b0b0b0" stroke-width="0.5"/>
<text x="676.5" y="237.15" font-size="4.3" fill="#3030d0" text-anchor="end" stroke="#3030d0" stroke-width="0.12">116,340</text>
<polygon points="679.80,235.00 681.80,235.00 680.80,233.60" fill="#333"/>
<polygon points="679.80,236.20 681.80,236.20 680.80,237.60" fill="#333"/>
<text x="688" y="237.15" font-size="4.3" fill="#222" textLength="6" lengthAdjust="spacingAndGlyphs" stroke="#222" stroke-width="0.12">mm</text>
<rect x="637.8" y="246" width="69.6" height="150" fill="#f0f0f0" stroke="#eebcc4" stroke-width="0.8"/>
<rect x="637.5" y="246" width="70.5" height="6" fill="#ee3a4a"/>
<rect x="638.7" y="247" width="4.5" height="4.5" fill="#cfe4f6"/>
<circle cx="640.9" cy="249.4" r="0.9" fill="#111"/>
<text x="645" y="250.89" font-size="4.7" fill="#111" font-weight="bold" textLength="38.7" lengthAdjust="spacingAndGlyphs" stroke="#111" stroke-width="0.1">Thick lens / Mirror</text>
<rect x="640.05" y="253.75" width="4.5" height="6.0" fill="#dcecf8" stroke="#9ac4e8" stroke-width="0.5"/>
<circle cx="642.3" cy="257.5" r="0.9" fill="#111"/>
<circle cx="651" cy="257.5" r="0.9" fill="#111"/>
<path d="M649 254.8 q2 -1.6 4 0" fill="none" stroke="#36a8e8" stroke-width="0.7"/>
<rect x="660.2" y="254.2" width="14.6" height="5.1" fill="#e4e4e4" stroke="#d0d0d0" stroke-width="0.4"/>
<text x="667.5" y="258.31" font-size="4.2" fill="#222" text-anchor="middle" textLength="11" lengthAdjust="spacingAndGlyphs" stroke="#222" stroke-width="0.12">rotate</text>
<rect x="676.2" y="254.2" width="8.6" height="5.1" fill="#e4e4e4" stroke="#d0d0d0" stroke-width="0.4"/>
<text x="680.5" y="258.31" font-size="4.2" fill="#222" text-anchor="middle" textLength="7" lengthAdjust="spacingAndGlyphs" stroke="#222" stroke-width="0.12">turn</text>
<rect x="639.5" y="263.5" width="66.5" height="47" rx="1" fill="#f0f0f0" stroke="#dcdcdc" stroke-width="0.6"/>
<rect x="639.3" y="263.5" width="66.8" height="5.6" fill="#e0e0e0"/>
<rect x="640.5" y="264.5" width="4.5" height="4.1" fill="#cfe4f6"/>
<circle cx="642.6999999999999" cy="266.7" r="0.9" fill="#111"/>
<text x="646.9" y="268.19" font-size="4.7" fill="#111" font-weight="bold" textLength="20.3" lengthAdjust="spacingAndGlyphs" stroke="#111" stroke-width="0.1">Geometry</text>
<text x="640.3" y="277.42" font-size="4.5" fill="#222" textLength="19.5" lengthAdjust="spacingAndGlyphs" stroke="#222" stroke-width="0.12">Hor. diam.:</text>
<rect x="661.65" y="272.85" width="28.7" height="5.9" fill="#ffffff" stroke="#c0c0c0" stroke-width="0.5"/>
<text x="683.5" y="277.42" font-size="4.5" fill="#3030d0" text-anchor="end" stroke="#3030d0" stroke-width="0.12">30,000</text>
<line x1="684.5" y1="273.0" x2="684.5" y2="278.6" stroke="#ccc" stroke-width="0.4"/>
<polygon points="686.30,275.20 688.50,275.20 687.40,273.70" fill="#333"/>
<polygon points="686.30,276.40 688.50,276.40 687.40,277.90" fill="#333"/>
<text x="693" y="277.42" font-size="4.5" fill="#222" textLength="7" lengthAdjust="spacingAndGlyphs" stroke="#222" stroke-width="0.12">mm</text>
<text x="640.3" y="284.72" font-size="4.5" fill="#222" textLength="19.5" lengthAdjust="spacingAndGlyphs" stroke="#222" stroke-width="0.12">Ver. diam.:</text>
<rect x="661.65" y="280.15000000000003" width="28.7" height="5.9" fill="#ffffff" stroke="#c0c0c0" stroke-width="0.5"/>
<text x="683.5" y="284.72" font-size="4.5" fill="#3030d0" text-anchor="end" stroke="#3030d0" stroke-width="0.12">30,000</text>
<line x1="684.5" y1="280.3" x2="684.5" y2="285.90000000000003" stroke="#ccc" stroke-width="0.4"/>
<polygon points="686.30,282.50 688.50,282.50 687.40,281.00" fill="#333"/>
<polygon points="686.30,283.70 688.50,283.70 687.40,285.20" fill="#333"/>
<text x="693" y="284.72" font-size="4.5" fill="#222" textLength="7" lengthAdjust="spacingAndGlyphs" stroke="#222" stroke-width="0.12">mm</text>
<text x="648.8" y="292.62" font-size="4.5" fill="#222" textLength="11" lengthAdjust="spacingAndGlyphs" stroke="#222" stroke-width="0.12">Width:</text>
<rect x="661.65" y="288.05" width="28.7" height="5.9" fill="#ffffff" stroke="#c0c0c0" stroke-width="0.5"/>
<text x="683.5" y="292.62" font-size="4.5" fill="#3030d0" text-anchor="end" stroke="#3030d0" stroke-width="0.12">15,000</text>
<line x1="684.5" y1="288.2" x2="684.5" y2="293.8" stroke="#ccc" stroke-width="0.4"/>
<polygon points="686.30,290.40 688.50,290.40 687.40,288.90" fill="#333"/>
<polygon points="686.30,291.60 688.50,291.60 687.40,293.10" fill="#333"/>
<text x="693" y="292.62" font-size="4.5" fill="#222" textLength="7" lengthAdjust="spacingAndGlyphs" stroke="#222" stroke-width="0.12">mm</text>
<path d="M705.5 276 v8 M704.5 275.5 h2 M704.5 284.5 h2" fill="none" stroke="#2a9ad8" stroke-width="0.7"/>
<circle cx="648" cy="303.6" r="2" fill="#fff" stroke="#444" stroke-width="0.5"/>
<circle cx="648" cy="303.6" r="1" fill="#222"/>
<text x="651.5" y="305.15" font-size="4.3" fill="#222" textLength="15" lengthAdjust="spacingAndGlyphs" stroke="#222" stroke-width="0.12">elliptical</text>
<circle cx="677" cy="303.6" r="2" fill="#fff" stroke="#444" stroke-width="0.5"/>
<text x="680.5" y="305.15" font-size="4.3" fill="#222" textLength="20" lengthAdjust="spacingAndGlyphs" stroke="#222" stroke-width="0.12">rectangular</text>
<rect x="639.3" y="311" width="66.8" height="5.6" fill="#e0e0e0"/>
<rect x="640.5" y="312" width="4.5" height="4.1" fill="#cfe4f6"/>
<circle cx="642.6999999999999" cy="314.2" r="0.9" fill="#111"/>
<text x="646.9" y="315.69" font-size="4.7" fill="#111" font-weight="bold" textLength="10" lengthAdjust="spacingAndGlyphs" stroke="#111" stroke-width="0.1">Type</text>
<circle cx="643.5" cy="322" r="2.1" fill="#fff" stroke="#444" stroke-width="0.5"/>
<circle cx="643.5" cy="322" r="1.1" fill="#222"/>
<text x="647.3" y="323.66" font-size="4.6" fill="#222" textLength="16.2" lengthAdjust="spacingAndGlyphs" stroke="#222" stroke-width="0.12">spherical</text>
<circle cx="643.5" cy="328.4" r="2.1" fill="#fff" stroke="#444" stroke-width="0.5"/>
<text x="647.3" y="330.06" font-size="4.6" fill="#222" textLength="39.4" lengthAdjust="spacingAndGlyphs" stroke="#222" stroke-width="0.12">cylindrical (horizontal)</text>
<circle cx="643.5" cy="335" r="2.1" fill="#fff" stroke="#444" stroke-width="0.5"/>
<text x="647.3" y="336.66" font-size="4.6" fill="#222" textLength="34.7" lengthAdjust="spacingAndGlyphs" stroke="#222" stroke-width="0.12">cylindrical (vertical)</text>
<rect x="639.3" y="342" width="66.8" height="5.6" fill="#e0e0e0"/>
<rect x="640.5" y="343" width="4.5" height="4.1" fill="#cfe4f6"/>
<circle cx="642.6999999999999" cy="345.2" r="0.9" fill="#111"/>
<text x="646.9" y="346.69" font-size="4.7" fill="#111" font-weight="bold" textLength="11" lengthAdjust="spacingAndGlyphs" stroke="#111" stroke-width="0.1">Glass</text>
<rect x="639.3" y="350.8" width="66.8" height="5.6" fill="#e0e0e0"/>
<rect x="640.5" y="351.8" width="4.5" height="4.1" fill="#cfe4f6"/>
<circle cx="642.6999999999999" cy="354.0" r="0.9" fill="#111"/>
<text x="646.9" y="355.49" font-size="4.7" fill="#111" font-weight="bold" textLength="14" lengthAdjust="spacingAndGlyphs" stroke="#111" stroke-width="0.1">Radius</text>
<text x="640.8" y="363.66" font-size="4.6" fill="#222" textLength="10.2" lengthAdjust="spacingAndGlyphs" stroke="#222" stroke-width="0.12">front:</text>
<rect x="652.55" y="358.85" width="29.2" height="6.3" fill="#ffffff" stroke="#c0c0c0" stroke-width="0.5"/>
<text x="675.5" y="363.62" font-size="4.5" fill="#3030d0" text-anchor="end" stroke="#3030d0" stroke-width="0.12">50,000</text>
<line x1="676.5" y1="359" x2="676.5" y2="365" stroke="#ccc" stroke-width="0.4"/>
<polygon points="678.20,361.40 680.40,361.40 679.30,359.90" fill="#333"/>
<polygon points="678.20,362.60 680.40,362.60 679.30,364.10" fill="#333"/>
<text x="685.2" y="363.62" font-size="4.5" fill="#222" textLength="5.8" lengthAdjust="spacingAndGlyphs" stroke="#222" stroke-width="0.12">mm</text>
<text x="640.8" y="372.46" font-size="4.6" fill="#222" textLength="9.2" lengthAdjust="spacingAndGlyphs" stroke="#222" stroke-width="0.12">back:</text>
<rect x="652.55" y="367.65000000000003" width="29.2" height="6.3" fill="#ffffff" stroke="#c0c0c0" stroke-width="0.5"/>
<text x="675.5" y="372.42" font-size="4.5" fill="#3030d0" text-anchor="end" stroke="#3030d0" stroke-width="0.12">-50,000</text>
<line x1="676.5" y1="367.8" x2="676.5" y2="373.8" stroke="#ccc" stroke-width="0.4"/>
<polygon points="678.20,370.20 680.40,370.20 679.30,368.70" fill="#333"/>
<polygon points="678.20,371.40 680.40,371.40 679.30,372.90" fill="#333"/>
<text x="685.2" y="372.42" font-size="4.5" fill="#222" textLength="5.8" lengthAdjust="spacingAndGlyphs" stroke="#222" stroke-width="0.12">mm</text>
<path d="M696.7 362.5 q1.6 4 0 8 M695.7 362 h2 M695.7 371 h2" fill="none" stroke="#2a9ad8" stroke-width="0.8"/>
<rect x="639.3" y="378.3" width="66.8" height="5.6" fill="#e0e0e0"/>
<rect x="640.5" y="379.3" width="4.5" height="4.1" fill="#cfe4f6"/>
<circle cx="642.6999999999999" cy="381.5" r="0.9" fill="#111"/>
<text x="646.9" y="382.99" font-size="4.7" fill="#111" font-weight="bold" textLength="11.5" lengthAdjust="spacingAndGlyphs" stroke="#111" stroke-width="0.1">Conic</text>
<rect x="635" y="388" width="73.5" height="5" fill="#f0f0f0"/>
<rect x="645" y="388.6" width="51" height="3.6" fill="#cdcdcd"/>
<polyline points="638.50,389.00 637.50,390.50 638.50,392.00" fill="none" stroke="#333" stroke-width="0.6"/>
<polyline points="705.50,389.00 706.50,390.50 705.50,392.00" fill="none" stroke="#333" stroke-width="0.6"/>
<rect x="582.0999999999999" y="396.5" width="3.9" height="3.9" fill="#ffffff" stroke="#555" stroke-width="0.6"/>
<text x="587" y="400.05" font-size="4.3" fill="#111" font-weight="bold" textLength="29.6" lengthAdjust="spacingAndGlyphs" stroke="#111" stroke-width="0.1">Quick preview</text>
<text x="629" y="400.03" font-size="4.8" fill="#111" font-weight="bold" textLength="17.5" lengthAdjust="spacingAndGlyphs" stroke="#111" stroke-width="0.1">Clipboard</text>
<text x="650.6" y="399.96" font-size="4.6" fill="#222" textLength="8.6" lengthAdjust="spacingAndGlyphs" stroke="#222" stroke-width="0.12">Type:</text>
<rect x="661.65" y="395.05" width="14.6" height="6.5" fill="#f4f4f4" stroke="#b0b0b0" stroke-width="0.5"/>
<text x="669" y="399.96" font-size="4.6" fill="#222" text-anchor="middle" textLength="8" lengthAdjust="spacingAndGlyphs" stroke="#222" stroke-width="0.12">Text</text>
<text x="680.2" y="399.96" font-size="4.6" fill="#222" textLength="14.8" lengthAdjust="spacingAndGlyphs" stroke="#222" stroke-width="0.12">Content:</text>
<rect x="697.25" y="395.05" width="8.3" height="6.5" fill="#ffffff" stroke="#b0b0b0" stroke-width="0.5"/>
<rect x="634" y="35" width="2" height="358" fill="#e6e6e6"/>
<rect x="636" y="41.5" width="0.8" height="82.3" fill="#c8c8c8"/>
</svg>
</body></html>
